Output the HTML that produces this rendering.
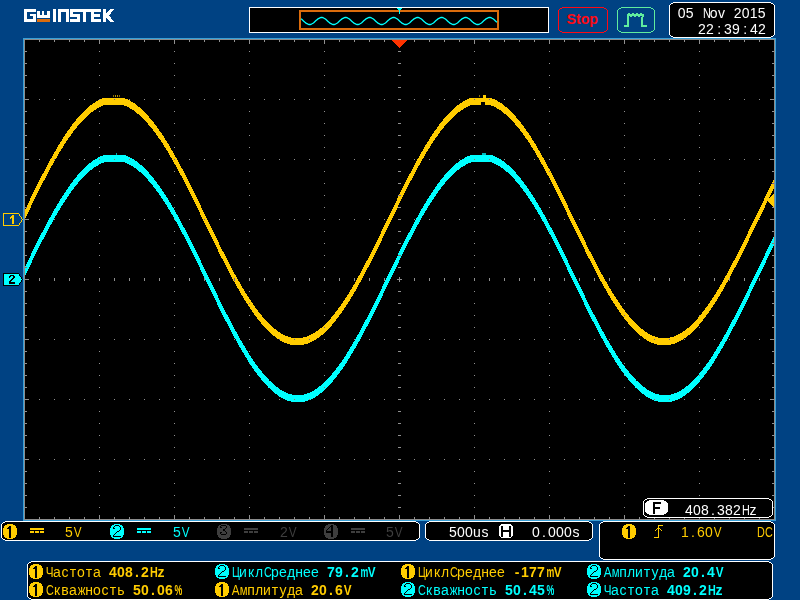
<!DOCTYPE html>
<html><head><meta charset="utf-8"><style>
html,body{margin:0;padding:0;}
body{width:800px;height:600px;overflow:hidden;background:#004283;position:relative;font-family:"Liberation Sans",sans-serif;}
svg{position:absolute;left:0;top:0;}
.mono{position:absolute;left:0;height:16px;line-height:16px;will-change:transform;}
.mono span{position:absolute;top:0;width:8.0px;text-align:center;}
</style></head><body>
<svg width="800" height="600" viewBox="0 0 800 600" shape-rendering="crispEdges">
<rect x="23" y="38" width="753" height="483" fill="#389fd6"/>
<rect x="24" y="39" width="751" height="481" fill="#8c8c8c"/>
<rect x="25" y="40" width="749" height="479" fill="#000"/>
<path d="M25 209h1v9h-1zM26 207h1v9h-1zM27 205h1v9h-1zM28 203h1v9h-1zM29 201h1v9h-1zM30 198h1v10h-1zM31 196h1v9h-1zM32 194h1v9h-1zM33 192h1v9h-1zM34 190h1v9h-1zM35 188h1v9h-1zM36 186h1v9h-1zM37 184h1v9h-1zM38 182h1v9h-1zM39 180h1v9h-1zM40 178h1v9h-1zM41 176h1v9h-1zM42 174h1v9h-1zM43 173h1v8h-1zM44 171h1v9h-1zM45 169h1v9h-1zM46 167h1v9h-1zM47 165h1v9h-1zM48 163h1v9h-1zM49 161h1v9h-1zM50 159h1v9h-1zM51 158h1v8h-1zM52 156h1v9h-1zM53 154h1v9h-1zM54 152h1v9h-1zM55 151h1v8h-1zM56 149h1v9h-1zM57 147h1v9h-1zM58 145h1v9h-1zM59 144h1v8h-1zM60 142h1v9h-1zM61 141h1v8h-1zM62 139h1v9h-1zM63 137h1v9h-1zM64 136h1v8h-1zM65 134h1v9h-1zM66 133h1v8h-1zM67 131h1v9h-1zM68 130h1v8h-1zM69 129h1v8h-1zM70 127h1v9h-1zM71 126h1v8h-1zM72 124h1v9h-1zM73 123h1v8h-1zM74 122h1v8h-1zM75 121h1v8h-1zM76 119h1v9h-1zM77 118h1v8h-1zM78 117h1v8h-1zM79 116h1v8h-1zM80 115h1v8h-1zM81 114h1v8h-1zM82 113h1v8h-1zM83 112h1v8h-1zM84 111h1v8h-1zM85 110h1v8h-1zM86 109h1v8h-1zM87 108h1v8h-1zM88 107h1v8h-1zM89 106h1v8h-1zM90 105h1v8h-1zM91 105h1v7h-1zM92 104h1v8h-1zM93 103h1v8h-1zM94 103h1v7h-1zM95 102h1v8h-1zM96 101h1v8h-1zM97 101h1v7h-1zM98 100h1v8h-1zM99 100h1v7h-1zM100 99h1v8h-1zM101 99h1v7h-1zM102 98h1v8h-1zM103 98h1v7h-1zM104 98h1v7h-1zM105 98h1v7h-1zM106 98h1v7h-1zM107 98h1v7h-1zM108 98h1v7h-1zM109 98h1v7h-1zM110 98h1v7h-1zM111 98h1v7h-1zM112 98h1v7h-1zM113 98h1v7h-1zM114 98h1v7h-1zM115 98h1v7h-1zM116 98h1v7h-1zM117 98h1v7h-1zM118 98h1v7h-1zM119 98h1v7h-1zM120 98h1v7h-1zM121 98h1v7h-1zM122 98h1v7h-1zM123 98h1v7h-1zM124 98h1v8h-1zM125 99h1v7h-1zM126 99h1v7h-1zM127 99h1v8h-1zM128 100h1v7h-1zM129 100h1v8h-1zM130 101h1v8h-1zM131 102h1v7h-1zM132 102h1v8h-1zM133 103h1v7h-1zM134 103h1v8h-1zM135 104h1v8h-1zM136 105h1v8h-1zM137 106h1v8h-1zM138 107h1v7h-1zM139 107h1v8h-1zM140 108h1v8h-1zM141 109h1v8h-1zM142 110h1v8h-1zM143 111h1v8h-1zM144 112h1v8h-1zM145 113h1v8h-1zM146 114h1v8h-1zM147 115h1v8h-1zM148 116h1v9h-1zM149 118h1v8h-1zM150 119h1v8h-1zM151 120h1v8h-1zM152 121h1v8h-1zM153 122h1v9h-1zM154 124h1v8h-1zM155 125h1v8h-1zM156 126h1v9h-1zM157 128h1v8h-1zM158 129h1v9h-1zM159 131h1v8h-1zM160 132h1v8h-1zM161 133h1v9h-1zM162 135h1v8h-1zM163 136h1v9h-1zM164 138h1v9h-1zM165 140h1v8h-1zM166 141h1v9h-1zM167 143h1v8h-1zM168 144h1v9h-1zM169 146h1v9h-1zM170 148h1v9h-1zM171 150h1v8h-1zM172 151h1v9h-1zM173 153h1v9h-1zM174 155h1v9h-1zM175 157h1v8h-1zM176 158h1v9h-1zM177 160h1v9h-1zM178 162h1v9h-1zM179 164h1v9h-1zM180 166h1v9h-1zM181 168h1v8h-1zM182 169h1v9h-1zM183 171h1v9h-1zM184 173h1v9h-1zM185 175h1v9h-1zM186 177h1v9h-1zM187 179h1v9h-1zM188 181h1v9h-1zM189 183h1v9h-1zM190 185h1v9h-1zM191 187h1v9h-1zM192 189h1v9h-1zM193 191h1v9h-1zM194 193h1v9h-1zM195 195h1v9h-1zM196 197h1v9h-1zM197 199h1v9h-1zM198 201h1v9h-1zM199 203h1v9h-1zM200 205h1v10h-1zM201 208h1v9h-1zM202 210h1v9h-1zM203 212h1v9h-1zM204 214h1v9h-1zM205 216h1v9h-1zM206 218h1v9h-1zM207 220h1v9h-1zM208 222h1v9h-1zM209 224h1v9h-1zM210 226h1v9h-1zM211 228h1v9h-1zM212 230h1v9h-1zM213 232h1v9h-1zM214 234h1v9h-1zM215 236h1v9h-1zM216 238h1v9h-1zM217 240h1v9h-1zM218 242h1v10h-1zM219 245h1v9h-1zM220 247h1v9h-1zM221 249h1v9h-1zM222 251h1v8h-1zM223 252h1v9h-1zM224 254h1v9h-1zM225 256h1v9h-1zM226 258h1v9h-1zM227 260h1v9h-1zM228 262h1v9h-1zM229 264h1v9h-1zM230 266h1v9h-1zM231 268h1v9h-1zM232 270h1v9h-1zM233 272h1v9h-1zM234 274h1v8h-1zM235 275h1v9h-1zM236 277h1v9h-1zM237 279h1v9h-1zM238 281h1v8h-1zM239 282h1v9h-1zM240 284h1v9h-1zM241 286h1v9h-1zM242 288h1v8h-1zM243 289h1v9h-1zM244 291h1v9h-1zM245 293h1v8h-1zM246 294h1v9h-1zM247 296h1v8h-1zM248 297h1v9h-1zM249 299h1v8h-1zM250 300h1v9h-1zM251 302h1v8h-1zM252 303h1v9h-1zM253 305h1v8h-1zM254 306h1v9h-1zM255 308h1v8h-1zM256 309h1v8h-1zM257 310h1v9h-1zM258 312h1v8h-1zM259 313h1v8h-1zM260 314h1v8h-1zM261 315h1v9h-1zM262 317h1v8h-1zM263 318h1v8h-1zM264 319h1v8h-1zM265 320h1v8h-1zM266 321h1v8h-1zM267 322h1v8h-1zM268 323h1v8h-1zM269 324h1v8h-1zM270 325h1v8h-1zM271 326h1v8h-1zM272 327h1v8h-1zM273 328h1v8h-1zM274 329h1v7h-1zM275 329h1v8h-1zM276 330h1v8h-1zM277 331h1v8h-1zM278 332h1v7h-1zM279 332h1v8h-1zM280 333h1v8h-1zM281 334h1v7h-1zM282 334h1v8h-1zM283 335h1v7h-1zM284 335h1v8h-1zM285 336h1v7h-1zM286 336h1v7h-1zM287 336h1v8h-1zM288 337h1v7h-1zM289 337h1v7h-1zM290 337h1v8h-1zM291 338h1v7h-1zM292 338h1v7h-1zM293 338h1v7h-1zM294 338h1v7h-1zM295 338h1v7h-1zM296 338h1v7h-1zM297 338h1v7h-1zM298 338h1v7h-1zM299 338h1v7h-1zM300 338h1v7h-1zM301 338h1v7h-1zM302 338h1v7h-1zM303 337h1v8h-1zM304 337h1v7h-1zM305 337h1v7h-1zM306 337h1v7h-1zM307 336h1v8h-1zM308 336h1v7h-1zM309 335h1v8h-1zM310 335h1v7h-1zM311 334h1v8h-1zM312 334h1v7h-1zM313 333h1v8h-1zM314 333h1v7h-1zM315 332h1v8h-1zM316 331h1v8h-1zM317 331h1v7h-1zM318 330h1v8h-1zM319 329h1v8h-1zM320 328h1v8h-1zM321 328h1v7h-1zM322 327h1v8h-1zM323 326h1v8h-1zM324 325h1v8h-1zM325 324h1v8h-1zM326 323h1v8h-1zM327 322h1v8h-1zM328 321h1v8h-1zM329 320h1v8h-1zM330 319h1v8h-1zM331 317h1v9h-1zM332 316h1v8h-1zM333 315h1v8h-1zM334 314h1v8h-1zM335 312h1v9h-1zM336 311h1v8h-1zM337 310h1v8h-1zM338 308h1v9h-1zM339 307h1v8h-1zM340 306h1v8h-1zM341 304h1v9h-1zM342 303h1v8h-1zM343 301h1v9h-1zM344 300h1v8h-1zM345 298h1v9h-1zM346 297h1v8h-1zM347 295h1v9h-1zM348 294h1v8h-1zM349 292h1v9h-1zM350 290h1v9h-1zM351 289h1v8h-1zM352 287h1v9h-1zM353 285h1v9h-1zM354 284h1v8h-1zM355 282h1v9h-1zM356 280h1v9h-1zM357 278h1v9h-1zM358 276h1v9h-1zM359 275h1v8h-1zM360 273h1v9h-1zM361 271h1v9h-1zM362 269h1v9h-1zM363 267h1v9h-1zM364 265h1v9h-1zM365 263h1v9h-1zM366 261h1v9h-1zM367 260h1v8h-1zM368 258h1v9h-1zM369 256h1v9h-1zM370 254h1v9h-1zM371 252h1v9h-1zM372 250h1v9h-1zM373 248h1v9h-1zM374 246h1v9h-1zM375 244h1v9h-1zM376 242h1v9h-1zM377 240h1v9h-1zM378 238h1v9h-1zM379 236h1v9h-1zM380 234h1v9h-1zM381 231h1v10h-1zM382 229h1v9h-1zM383 227h1v9h-1zM384 225h1v9h-1zM385 223h1v9h-1zM386 221h1v9h-1zM387 219h1v9h-1zM388 217h1v9h-1zM389 215h1v9h-1zM390 213h1v9h-1zM391 211h1v9h-1zM392 209h1v9h-1zM393 207h1v9h-1zM394 205h1v9h-1zM395 203h1v9h-1zM396 201h1v9h-1zM397 198h1v10h-1zM398 196h1v9h-1zM399 194h1v9h-1zM400 192h1v9h-1zM401 190h1v9h-1zM402 188h1v9h-1zM403 186h1v9h-1zM404 184h1v9h-1zM405 182h1v9h-1zM406 180h1v9h-1zM407 178h1v9h-1zM408 176h1v9h-1zM409 174h1v9h-1zM410 173h1v8h-1zM411 171h1v9h-1zM412 169h1v9h-1zM413 167h1v9h-1zM414 165h1v9h-1zM415 163h1v9h-1zM416 161h1v9h-1zM417 159h1v9h-1zM418 158h1v8h-1zM419 156h1v9h-1zM420 154h1v9h-1zM421 152h1v9h-1zM422 151h1v8h-1zM423 149h1v9h-1zM424 147h1v9h-1zM425 145h1v9h-1zM426 144h1v8h-1zM427 142h1v9h-1zM428 141h1v8h-1zM429 139h1v9h-1zM430 137h1v9h-1zM431 136h1v8h-1zM432 134h1v9h-1zM433 133h1v8h-1zM434 131h1v9h-1zM435 130h1v8h-1zM436 129h1v8h-1zM437 127h1v9h-1zM438 126h1v8h-1zM439 124h1v9h-1zM440 123h1v8h-1zM441 122h1v8h-1zM442 121h1v8h-1zM443 119h1v9h-1zM444 118h1v8h-1zM445 117h1v8h-1zM446 116h1v8h-1zM447 115h1v8h-1zM448 114h1v8h-1zM449 113h1v8h-1zM450 112h1v8h-1zM451 111h1v8h-1zM452 110h1v8h-1zM453 109h1v8h-1zM454 108h1v8h-1zM455 107h1v8h-1zM456 106h1v8h-1zM457 105h1v8h-1zM458 105h1v7h-1zM459 104h1v8h-1zM460 103h1v8h-1zM461 103h1v7h-1zM462 102h1v8h-1zM463 101h1v8h-1zM464 101h1v7h-1zM465 100h1v8h-1zM466 100h1v7h-1zM467 99h1v8h-1zM468 99h1v7h-1zM469 98h1v8h-1zM470 98h1v7h-1zM471 98h1v7h-1zM472 98h1v7h-1zM473 98h1v7h-1zM474 98h1v7h-1zM475 98h1v7h-1zM476 98h1v7h-1zM477 98h1v7h-1zM478 98h1v7h-1zM479 98h1v7h-1zM480 98h1v7h-1zM481 98h1v7h-1zM482 98h1v7h-1zM483 98h1v7h-1zM484 98h1v7h-1zM485 98h1v7h-1zM486 98h1v7h-1zM487 98h1v7h-1zM488 98h1v7h-1zM489 98h1v7h-1zM490 98h1v7h-1zM491 98h1v8h-1zM492 99h1v7h-1zM493 99h1v7h-1zM494 99h1v8h-1zM495 100h1v7h-1zM496 100h1v8h-1zM497 101h1v8h-1zM498 102h1v7h-1zM499 102h1v8h-1zM500 103h1v7h-1zM501 103h1v8h-1zM502 104h1v8h-1zM503 105h1v8h-1zM504 106h1v8h-1zM505 107h1v7h-1zM506 107h1v8h-1zM507 108h1v8h-1zM508 109h1v8h-1zM509 110h1v8h-1zM510 111h1v8h-1zM511 112h1v8h-1zM512 113h1v8h-1zM513 114h1v8h-1zM514 115h1v8h-1zM515 116h1v9h-1zM516 118h1v8h-1zM517 119h1v8h-1zM518 120h1v8h-1zM519 121h1v8h-1zM520 122h1v9h-1zM521 124h1v8h-1zM522 125h1v8h-1zM523 126h1v9h-1zM524 128h1v8h-1zM525 129h1v9h-1zM526 131h1v8h-1zM527 132h1v8h-1zM528 133h1v9h-1zM529 135h1v8h-1zM530 136h1v9h-1zM531 138h1v9h-1zM532 140h1v8h-1zM533 141h1v9h-1zM534 143h1v8h-1zM535 144h1v9h-1zM536 146h1v9h-1zM537 148h1v9h-1zM538 150h1v8h-1zM539 151h1v9h-1zM540 153h1v9h-1zM541 155h1v9h-1zM542 157h1v8h-1zM543 158h1v9h-1zM544 160h1v9h-1zM545 162h1v9h-1zM546 164h1v9h-1zM547 166h1v9h-1zM548 168h1v8h-1zM549 169h1v9h-1zM550 171h1v9h-1zM551 173h1v9h-1zM552 175h1v9h-1zM553 177h1v9h-1zM554 179h1v9h-1zM555 181h1v9h-1zM556 183h1v9h-1zM557 185h1v9h-1zM558 187h1v9h-1zM559 189h1v9h-1zM560 191h1v9h-1zM561 193h1v9h-1zM562 195h1v9h-1zM563 197h1v9h-1zM564 199h1v9h-1zM565 201h1v9h-1zM566 203h1v9h-1zM567 205h1v10h-1zM568 208h1v9h-1zM569 210h1v9h-1zM570 212h1v9h-1zM571 214h1v9h-1zM572 216h1v9h-1zM573 218h1v9h-1zM574 220h1v9h-1zM575 222h1v9h-1zM576 224h1v9h-1zM577 226h1v9h-1zM578 228h1v9h-1zM579 230h1v9h-1zM580 232h1v9h-1zM581 234h1v9h-1zM582 236h1v9h-1zM583 238h1v9h-1zM584 240h1v9h-1zM585 242h1v10h-1zM586 245h1v9h-1zM587 247h1v9h-1zM588 249h1v9h-1zM589 251h1v8h-1zM590 252h1v9h-1zM591 254h1v9h-1zM592 256h1v9h-1zM593 258h1v9h-1zM594 260h1v9h-1zM595 262h1v9h-1zM596 264h1v9h-1zM597 266h1v9h-1zM598 268h1v9h-1zM599 270h1v9h-1zM600 272h1v9h-1zM601 274h1v8h-1zM602 275h1v9h-1zM603 277h1v9h-1zM604 279h1v9h-1zM605 281h1v8h-1zM606 282h1v9h-1zM607 284h1v9h-1zM608 286h1v9h-1zM609 288h1v8h-1zM610 289h1v9h-1zM611 291h1v9h-1zM612 293h1v8h-1zM613 294h1v9h-1zM614 296h1v8h-1zM615 297h1v9h-1zM616 299h1v8h-1zM617 300h1v9h-1zM618 302h1v8h-1zM619 303h1v9h-1zM620 305h1v8h-1zM621 306h1v9h-1zM622 308h1v8h-1zM623 309h1v8h-1zM624 310h1v9h-1zM625 312h1v8h-1zM626 313h1v8h-1zM627 314h1v8h-1zM628 315h1v9h-1zM629 317h1v8h-1zM630 318h1v8h-1zM631 319h1v8h-1zM632 320h1v8h-1zM633 321h1v8h-1zM634 322h1v8h-1zM635 323h1v8h-1zM636 324h1v8h-1zM637 325h1v8h-1zM638 326h1v8h-1zM639 327h1v8h-1zM640 328h1v8h-1zM641 329h1v7h-1zM642 329h1v8h-1zM643 330h1v8h-1zM644 331h1v8h-1zM645 332h1v7h-1zM646 332h1v8h-1zM647 333h1v8h-1zM648 334h1v7h-1zM649 334h1v8h-1zM650 335h1v7h-1zM651 335h1v8h-1zM652 336h1v7h-1zM653 336h1v7h-1zM654 336h1v8h-1zM655 337h1v7h-1zM656 337h1v7h-1zM657 337h1v8h-1zM658 338h1v7h-1zM659 338h1v7h-1zM660 338h1v7h-1zM661 338h1v7h-1zM662 338h1v7h-1zM663 338h1v7h-1zM664 338h1v7h-1zM665 338h1v7h-1zM666 338h1v7h-1zM667 338h1v7h-1zM668 338h1v7h-1zM669 338h1v7h-1zM670 337h1v8h-1zM671 337h1v7h-1zM672 337h1v7h-1zM673 337h1v7h-1zM674 336h1v8h-1zM675 336h1v7h-1zM676 335h1v8h-1zM677 335h1v7h-1zM678 334h1v8h-1zM679 334h1v7h-1zM680 333h1v8h-1zM681 333h1v7h-1zM682 332h1v8h-1zM683 331h1v8h-1zM684 331h1v7h-1zM685 330h1v8h-1zM686 329h1v8h-1zM687 328h1v8h-1zM688 328h1v7h-1zM689 327h1v8h-1zM690 326h1v8h-1zM691 325h1v8h-1zM692 324h1v8h-1zM693 323h1v8h-1zM694 322h1v8h-1zM695 321h1v8h-1zM696 320h1v8h-1zM697 319h1v8h-1zM698 317h1v9h-1zM699 316h1v8h-1zM700 315h1v8h-1zM701 314h1v8h-1zM702 312h1v9h-1zM703 311h1v8h-1zM704 310h1v8h-1zM705 308h1v9h-1zM706 307h1v8h-1zM707 306h1v8h-1zM708 304h1v9h-1zM709 303h1v8h-1zM710 301h1v9h-1zM711 300h1v8h-1zM712 298h1v9h-1zM713 297h1v8h-1zM714 295h1v9h-1zM715 294h1v8h-1zM716 292h1v9h-1zM717 290h1v9h-1zM718 289h1v8h-1zM719 287h1v9h-1zM720 285h1v9h-1zM721 284h1v8h-1zM722 282h1v9h-1zM723 280h1v9h-1zM724 278h1v9h-1zM725 276h1v9h-1zM726 275h1v8h-1zM727 273h1v9h-1zM728 271h1v9h-1zM729 269h1v9h-1zM730 267h1v9h-1zM731 265h1v9h-1zM732 263h1v9h-1zM733 261h1v9h-1zM734 260h1v8h-1zM735 258h1v9h-1zM736 256h1v9h-1zM737 254h1v9h-1zM738 252h1v9h-1zM739 250h1v9h-1zM740 248h1v9h-1zM741 246h1v9h-1zM742 244h1v9h-1zM743 242h1v9h-1zM744 240h1v9h-1zM745 238h1v9h-1zM746 236h1v9h-1zM747 234h1v9h-1zM748 231h1v10h-1zM749 229h1v9h-1zM750 227h1v9h-1zM751 225h1v9h-1zM752 223h1v9h-1zM753 221h1v9h-1zM754 219h1v9h-1zM755 217h1v9h-1zM756 215h1v9h-1zM757 213h1v9h-1zM758 211h1v9h-1zM759 209h1v9h-1zM760 207h1v9h-1zM761 205h1v9h-1zM762 203h1v9h-1zM763 201h1v9h-1zM764 198h1v10h-1zM765 196h1v9h-1zM766 194h1v9h-1zM767 192h1v9h-1zM768 190h1v9h-1zM769 188h1v9h-1zM770 186h1v9h-1zM771 184h1v9h-1zM772 182h1v9h-1zM773 180h1v9h-1z" fill="#ffcc00"/>
<path d="M25 266h1v9h-1zM26 264h1v9h-1zM27 262h1v9h-1zM28 260h1v9h-1zM29 258h1v9h-1zM30 256h1v9h-1zM31 253h1v10h-1zM32 251h1v9h-1zM33 249h1v9h-1zM34 247h1v9h-1zM35 245h1v9h-1zM36 243h1v9h-1zM37 241h1v9h-1zM38 239h1v9h-1zM39 237h1v9h-1zM40 235h1v9h-1zM41 233h1v9h-1zM42 232h1v8h-1zM43 230h1v9h-1zM44 228h1v9h-1zM45 226h1v9h-1zM46 224h1v9h-1zM47 222h1v9h-1zM48 220h1v9h-1zM49 218h1v9h-1zM50 217h1v8h-1zM51 215h1v9h-1zM52 213h1v9h-1zM53 211h1v9h-1zM54 209h1v9h-1zM55 208h1v8h-1zM56 206h1v9h-1zM57 204h1v9h-1zM58 203h1v8h-1zM59 201h1v9h-1zM60 199h1v9h-1zM61 198h1v8h-1zM62 196h1v9h-1zM63 195h1v8h-1zM64 193h1v9h-1zM65 192h1v8h-1zM66 190h1v9h-1zM67 189h1v8h-1zM68 187h1v9h-1zM69 186h1v8h-1zM70 184h1v9h-1zM71 183h1v8h-1zM72 182h1v8h-1zM73 180h1v9h-1zM74 179h1v8h-1zM75 178h1v8h-1zM76 177h1v8h-1zM77 175h1v9h-1zM78 174h1v8h-1zM79 173h1v8h-1zM80 172h1v8h-1zM81 171h1v8h-1zM82 170h1v8h-1zM83 169h1v8h-1zM84 168h1v8h-1zM85 167h1v8h-1zM86 166h1v8h-1zM87 165h1v8h-1zM88 164h1v8h-1zM89 163h1v8h-1zM90 163h1v7h-1zM91 162h1v8h-1zM92 161h1v8h-1zM93 160h1v8h-1zM94 160h1v7h-1zM95 159h1v8h-1zM96 159h1v7h-1zM97 158h1v8h-1zM98 157h1v8h-1zM99 157h1v7h-1zM100 156h1v8h-1zM101 156h1v7h-1zM102 156h1v7h-1zM103 155h1v8h-1zM104 155h1v7h-1zM105 155h1v7h-1zM106 155h1v7h-1zM107 155h1v7h-1zM108 155h1v7h-1zM109 155h1v7h-1zM110 155h1v7h-1zM111 155h1v7h-1zM112 155h1v7h-1zM113 155h1v7h-1zM114 155h1v7h-1zM115 155h1v7h-1zM116 155h1v7h-1zM117 155h1v7h-1zM118 155h1v7h-1zM119 155h1v7h-1zM120 155h1v7h-1zM121 155h1v7h-1zM122 155h1v7h-1zM123 155h1v7h-1zM124 155h1v7h-1zM125 155h1v8h-1zM126 156h1v7h-1zM127 156h1v8h-1zM128 157h1v7h-1zM129 157h1v8h-1zM130 158h1v7h-1zM131 158h1v8h-1zM132 159h1v7h-1zM133 159h1v8h-1zM134 160h1v8h-1zM135 161h1v7h-1zM136 161h1v8h-1zM137 162h1v8h-1zM138 163h1v8h-1zM139 164h1v8h-1zM140 165h1v7h-1zM141 165h1v8h-1zM142 166h1v8h-1zM143 167h1v8h-1zM144 168h1v8h-1zM145 169h1v8h-1zM146 170h1v8h-1zM147 171h1v8h-1zM148 172h1v9h-1zM149 174h1v8h-1zM150 175h1v8h-1zM151 176h1v8h-1zM152 177h1v8h-1zM153 178h1v9h-1zM154 180h1v8h-1zM155 181h1v8h-1zM156 182h1v9h-1zM157 184h1v8h-1zM158 185h1v8h-1zM159 186h1v9h-1zM160 188h1v8h-1zM161 189h1v9h-1zM162 191h1v8h-1zM163 192h1v9h-1zM164 194h1v8h-1zM165 195h1v9h-1zM166 197h1v8h-1zM167 198h1v9h-1zM168 200h1v9h-1zM169 202h1v8h-1zM170 203h1v9h-1zM171 205h1v9h-1zM172 207h1v8h-1zM173 208h1v9h-1zM174 210h1v9h-1zM175 212h1v9h-1zM176 214h1v8h-1zM177 215h1v9h-1zM178 217h1v9h-1zM179 219h1v9h-1zM180 221h1v9h-1zM181 223h1v9h-1zM182 225h1v9h-1zM183 227h1v8h-1zM184 228h1v9h-1zM185 230h1v9h-1zM186 232h1v9h-1zM187 234h1v9h-1zM188 236h1v9h-1zM189 238h1v9h-1zM190 240h1v9h-1zM191 242h1v9h-1zM192 244h1v9h-1zM193 246h1v9h-1zM194 248h1v9h-1zM195 250h1v9h-1zM196 252h1v9h-1zM197 254h1v9h-1zM198 256h1v9h-1zM199 258h1v9h-1zM200 260h1v10h-1zM201 263h1v9h-1zM202 265h1v9h-1zM203 267h1v9h-1zM204 269h1v9h-1zM205 271h1v9h-1zM206 273h1v9h-1zM207 275h1v9h-1zM208 277h1v9h-1zM209 279h1v9h-1zM210 281h1v9h-1zM211 283h1v9h-1zM212 285h1v9h-1zM213 287h1v9h-1zM214 289h1v9h-1zM215 291h1v9h-1zM216 293h1v9h-1zM217 295h1v10h-1zM218 298h1v9h-1zM219 300h1v9h-1zM220 302h1v9h-1zM221 304h1v9h-1zM222 306h1v9h-1zM223 308h1v9h-1zM224 310h1v9h-1zM225 312h1v9h-1zM226 314h1v8h-1zM227 315h1v9h-1zM228 317h1v9h-1zM229 319h1v9h-1zM230 321h1v9h-1zM231 323h1v9h-1zM232 325h1v9h-1zM233 327h1v9h-1zM234 329h1v9h-1zM235 331h1v8h-1zM236 332h1v9h-1zM237 334h1v9h-1zM238 336h1v9h-1zM239 338h1v9h-1zM240 340h1v8h-1zM241 341h1v9h-1zM242 343h1v9h-1zM243 345h1v8h-1zM244 346h1v9h-1zM245 348h1v9h-1zM246 350h1v8h-1zM247 351h1v9h-1zM248 353h1v9h-1zM249 355h1v8h-1zM250 356h1v9h-1zM251 358h1v8h-1zM252 359h1v9h-1zM253 361h1v8h-1zM254 362h1v9h-1zM255 364h1v8h-1zM256 365h1v8h-1zM257 366h1v9h-1zM258 368h1v8h-1zM259 369h1v8h-1zM260 370h1v8h-1zM261 371h1v9h-1zM262 373h1v8h-1zM263 374h1v8h-1zM264 375h1v8h-1zM265 376h1v8h-1zM266 377h1v8h-1zM267 378h1v8h-1zM268 379h1v9h-1zM269 381h1v7h-1zM270 381h1v8h-1zM271 382h1v8h-1zM272 383h1v8h-1zM273 384h1v8h-1zM274 385h1v8h-1zM275 386h1v8h-1zM276 387h1v7h-1zM277 387h1v8h-1zM278 388h1v8h-1zM279 389h1v8h-1zM280 390h1v7h-1zM281 390h1v8h-1zM282 391h1v7h-1zM283 391h1v8h-1zM284 392h1v7h-1zM285 392h1v8h-1zM286 393h1v7h-1zM287 393h1v8h-1zM288 394h1v7h-1zM289 394h1v7h-1zM290 394h1v7h-1zM291 394h1v8h-1zM292 395h1v7h-1zM293 395h1v7h-1zM294 395h1v7h-1zM295 395h1v7h-1zM296 395h1v7h-1zM297 395h1v7h-1zM298 395h1v7h-1zM299 395h1v7h-1zM300 395h1v7h-1zM301 395h1v7h-1zM302 395h1v7h-1zM303 395h1v7h-1zM304 394h1v8h-1zM305 394h1v7h-1zM306 394h1v7h-1zM307 393h1v8h-1zM308 393h1v7h-1zM309 393h1v7h-1zM310 392h1v8h-1zM311 392h1v7h-1zM312 391h1v8h-1zM313 391h1v7h-1zM314 390h1v8h-1zM315 389h1v8h-1zM316 389h1v7h-1zM317 388h1v8h-1zM318 387h1v8h-1zM319 386h1v8h-1zM320 386h1v7h-1zM321 385h1v8h-1zM322 384h1v8h-1zM323 383h1v8h-1zM324 382h1v8h-1zM325 381h1v8h-1zM326 380h1v8h-1zM327 379h1v8h-1zM328 378h1v8h-1zM329 377h1v8h-1zM330 376h1v8h-1zM331 375h1v8h-1zM332 373h1v9h-1zM333 372h1v8h-1zM334 371h1v8h-1zM335 370h1v8h-1zM336 368h1v9h-1zM337 367h1v8h-1zM338 366h1v8h-1zM339 364h1v9h-1zM340 363h1v8h-1zM341 362h1v8h-1zM342 360h1v9h-1zM343 359h1v8h-1zM344 357h1v9h-1zM345 356h1v8h-1zM346 354h1v9h-1zM347 352h1v9h-1zM348 351h1v8h-1zM349 349h1v9h-1zM350 347h1v9h-1zM351 346h1v8h-1zM352 344h1v9h-1zM353 342h1v9h-1zM354 341h1v8h-1zM355 339h1v9h-1zM356 337h1v9h-1zM357 335h1v9h-1zM358 334h1v8h-1zM359 332h1v9h-1zM360 330h1v9h-1zM361 328h1v9h-1zM362 326h1v9h-1zM363 324h1v9h-1zM364 322h1v9h-1zM365 320h1v9h-1zM366 319h1v8h-1zM367 317h1v9h-1zM368 315h1v9h-1zM369 313h1v9h-1zM370 311h1v9h-1zM371 309h1v9h-1zM372 307h1v9h-1zM373 305h1v9h-1zM374 303h1v9h-1zM375 301h1v9h-1zM376 299h1v9h-1zM377 297h1v9h-1zM378 295h1v9h-1zM379 293h1v9h-1zM380 291h1v9h-1zM381 289h1v9h-1zM382 286h1v10h-1zM383 284h1v9h-1zM384 282h1v9h-1zM385 280h1v9h-1zM386 278h1v9h-1zM387 276h1v9h-1zM388 274h1v9h-1zM389 272h1v9h-1zM390 270h1v9h-1zM391 268h1v9h-1zM392 266h1v9h-1zM393 264h1v9h-1zM394 262h1v9h-1zM395 260h1v9h-1zM396 258h1v9h-1zM397 256h1v9h-1zM398 253h1v10h-1zM399 251h1v9h-1zM400 249h1v9h-1zM401 247h1v9h-1zM402 245h1v9h-1zM403 243h1v9h-1zM404 241h1v9h-1zM405 239h1v9h-1zM406 237h1v9h-1zM407 235h1v9h-1zM408 233h1v9h-1zM409 232h1v8h-1zM410 230h1v9h-1zM411 228h1v9h-1zM412 226h1v9h-1zM413 224h1v9h-1zM414 222h1v9h-1zM415 220h1v9h-1zM416 218h1v9h-1zM417 217h1v8h-1zM418 215h1v9h-1zM419 213h1v9h-1zM420 211h1v9h-1zM421 209h1v9h-1zM422 208h1v8h-1zM423 206h1v9h-1zM424 204h1v9h-1zM425 203h1v8h-1zM426 201h1v9h-1zM427 199h1v9h-1zM428 198h1v8h-1zM429 196h1v9h-1zM430 195h1v8h-1zM431 193h1v9h-1zM432 192h1v8h-1zM433 190h1v9h-1zM434 189h1v8h-1zM435 187h1v9h-1zM436 186h1v8h-1zM437 184h1v9h-1zM438 183h1v8h-1zM439 182h1v8h-1zM440 180h1v9h-1zM441 179h1v8h-1zM442 178h1v8h-1zM443 177h1v8h-1zM444 175h1v9h-1zM445 174h1v8h-1zM446 173h1v8h-1zM447 172h1v8h-1zM448 171h1v8h-1zM449 170h1v8h-1zM450 169h1v8h-1zM451 168h1v8h-1zM452 167h1v8h-1zM453 166h1v8h-1zM454 165h1v8h-1zM455 164h1v8h-1zM456 163h1v8h-1zM457 163h1v7h-1zM458 162h1v8h-1zM459 161h1v8h-1zM460 160h1v8h-1zM461 160h1v7h-1zM462 159h1v8h-1zM463 159h1v7h-1zM464 158h1v8h-1zM465 157h1v8h-1zM466 157h1v7h-1zM467 156h1v8h-1zM468 156h1v7h-1zM469 156h1v7h-1zM470 155h1v8h-1zM471 155h1v7h-1zM472 155h1v7h-1zM473 155h1v7h-1zM474 155h1v7h-1zM475 155h1v7h-1zM476 155h1v7h-1zM477 155h1v7h-1zM478 155h1v7h-1zM479 155h1v7h-1zM480 155h1v7h-1zM481 155h1v7h-1zM482 155h1v7h-1zM483 155h1v7h-1zM484 155h1v7h-1zM485 155h1v7h-1zM486 155h1v7h-1zM487 155h1v7h-1zM488 155h1v7h-1zM489 155h1v7h-1zM490 155h1v7h-1zM491 155h1v7h-1zM492 155h1v8h-1zM493 156h1v7h-1zM494 156h1v8h-1zM495 157h1v7h-1zM496 157h1v8h-1zM497 158h1v7h-1zM498 158h1v8h-1zM499 159h1v7h-1zM500 159h1v8h-1zM501 160h1v8h-1zM502 161h1v7h-1zM503 161h1v8h-1zM504 162h1v8h-1zM505 163h1v8h-1zM506 164h1v8h-1zM507 165h1v7h-1zM508 165h1v8h-1zM509 166h1v8h-1zM510 167h1v8h-1zM511 168h1v8h-1zM512 169h1v8h-1zM513 170h1v8h-1zM514 171h1v8h-1zM515 172h1v9h-1zM516 174h1v8h-1zM517 175h1v8h-1zM518 176h1v8h-1zM519 177h1v8h-1zM520 178h1v9h-1zM521 180h1v8h-1zM522 181h1v8h-1zM523 182h1v9h-1zM524 184h1v8h-1zM525 185h1v8h-1zM526 186h1v9h-1zM527 188h1v8h-1zM528 189h1v9h-1zM529 191h1v8h-1zM530 192h1v9h-1zM531 194h1v8h-1zM532 195h1v9h-1zM533 197h1v8h-1zM534 198h1v9h-1zM535 200h1v9h-1zM536 202h1v8h-1zM537 203h1v9h-1zM538 205h1v9h-1zM539 207h1v8h-1zM540 208h1v9h-1zM541 210h1v9h-1zM542 212h1v9h-1zM543 214h1v8h-1zM544 215h1v9h-1zM545 217h1v9h-1zM546 219h1v9h-1zM547 221h1v9h-1zM548 223h1v9h-1zM549 225h1v9h-1zM550 227h1v8h-1zM551 228h1v9h-1zM552 230h1v9h-1zM553 232h1v9h-1zM554 234h1v9h-1zM555 236h1v9h-1zM556 238h1v9h-1zM557 240h1v9h-1zM558 242h1v9h-1zM559 244h1v9h-1zM560 246h1v9h-1zM561 248h1v9h-1zM562 250h1v9h-1zM563 252h1v9h-1zM564 254h1v9h-1zM565 256h1v9h-1zM566 258h1v9h-1zM567 260h1v10h-1zM568 263h1v9h-1zM569 265h1v9h-1zM570 267h1v9h-1zM571 269h1v9h-1zM572 271h1v9h-1zM573 273h1v9h-1zM574 275h1v9h-1zM575 277h1v9h-1zM576 279h1v9h-1zM577 281h1v9h-1zM578 283h1v9h-1zM579 285h1v9h-1zM580 287h1v9h-1zM581 289h1v9h-1zM582 291h1v9h-1zM583 293h1v9h-1zM584 295h1v10h-1zM585 298h1v9h-1zM586 300h1v9h-1zM587 302h1v9h-1zM588 304h1v9h-1zM589 306h1v9h-1zM590 308h1v9h-1zM591 310h1v9h-1zM592 312h1v9h-1zM593 314h1v8h-1zM594 315h1v9h-1zM595 317h1v9h-1zM596 319h1v9h-1zM597 321h1v9h-1zM598 323h1v9h-1zM599 325h1v9h-1zM600 327h1v9h-1zM601 329h1v9h-1zM602 331h1v8h-1zM603 332h1v9h-1zM604 334h1v9h-1zM605 336h1v9h-1zM606 338h1v9h-1zM607 340h1v8h-1zM608 341h1v9h-1zM609 343h1v9h-1zM610 345h1v8h-1zM611 346h1v9h-1zM612 348h1v9h-1zM613 350h1v8h-1zM614 351h1v9h-1zM615 353h1v9h-1zM616 355h1v8h-1zM617 356h1v9h-1zM618 358h1v8h-1zM619 359h1v9h-1zM620 361h1v8h-1zM621 362h1v9h-1zM622 364h1v8h-1zM623 365h1v8h-1zM624 366h1v9h-1zM625 368h1v8h-1zM626 369h1v8h-1zM627 370h1v8h-1zM628 371h1v9h-1zM629 373h1v8h-1zM630 374h1v8h-1zM631 375h1v8h-1zM632 376h1v8h-1zM633 377h1v8h-1zM634 378h1v8h-1zM635 379h1v9h-1zM636 381h1v7h-1zM637 381h1v8h-1zM638 382h1v8h-1zM639 383h1v8h-1zM640 384h1v8h-1zM641 385h1v8h-1zM642 386h1v8h-1zM643 387h1v7h-1zM644 387h1v8h-1zM645 388h1v8h-1zM646 389h1v8h-1zM647 390h1v7h-1zM648 390h1v8h-1zM649 391h1v7h-1zM650 391h1v8h-1zM651 392h1v7h-1zM652 392h1v8h-1zM653 393h1v7h-1zM654 393h1v8h-1zM655 394h1v7h-1zM656 394h1v7h-1zM657 394h1v7h-1zM658 394h1v8h-1zM659 395h1v7h-1zM660 395h1v7h-1zM661 395h1v7h-1zM662 395h1v7h-1zM663 395h1v7h-1zM664 395h1v7h-1zM665 395h1v7h-1zM666 395h1v7h-1zM667 395h1v7h-1zM668 395h1v7h-1zM669 395h1v7h-1zM670 395h1v7h-1zM671 394h1v8h-1zM672 394h1v7h-1zM673 394h1v7h-1zM674 393h1v8h-1zM675 393h1v7h-1zM676 393h1v7h-1zM677 392h1v8h-1zM678 392h1v7h-1zM679 391h1v8h-1zM680 391h1v7h-1zM681 390h1v8h-1zM682 389h1v8h-1zM683 389h1v7h-1zM684 388h1v8h-1zM685 387h1v8h-1zM686 386h1v8h-1zM687 386h1v7h-1zM688 385h1v8h-1zM689 384h1v8h-1zM690 383h1v8h-1zM691 382h1v8h-1zM692 381h1v8h-1zM693 380h1v8h-1zM694 379h1v8h-1zM695 378h1v8h-1zM696 377h1v8h-1zM697 376h1v8h-1zM698 375h1v8h-1zM699 373h1v9h-1zM700 372h1v8h-1zM701 371h1v8h-1zM702 370h1v8h-1zM703 368h1v9h-1zM704 367h1v8h-1zM705 366h1v8h-1zM706 364h1v9h-1zM707 363h1v8h-1zM708 362h1v8h-1zM709 360h1v9h-1zM710 359h1v8h-1zM711 357h1v9h-1zM712 356h1v8h-1zM713 354h1v9h-1zM714 352h1v9h-1zM715 351h1v8h-1zM716 349h1v9h-1zM717 347h1v9h-1zM718 346h1v8h-1zM719 344h1v9h-1zM720 342h1v9h-1zM721 341h1v8h-1zM722 339h1v9h-1zM723 337h1v9h-1zM724 335h1v9h-1zM725 334h1v8h-1zM726 332h1v9h-1zM727 330h1v9h-1zM728 328h1v9h-1zM729 326h1v9h-1zM730 324h1v9h-1zM731 322h1v9h-1zM732 320h1v9h-1zM733 319h1v8h-1zM734 317h1v9h-1zM735 315h1v9h-1zM736 313h1v9h-1zM737 311h1v9h-1zM738 309h1v9h-1zM739 307h1v9h-1zM740 305h1v9h-1zM741 303h1v9h-1zM742 301h1v9h-1zM743 299h1v9h-1zM744 297h1v9h-1zM745 295h1v9h-1zM746 293h1v9h-1zM747 291h1v9h-1zM748 289h1v9h-1zM749 286h1v10h-1zM750 284h1v9h-1zM751 282h1v9h-1zM752 280h1v9h-1zM753 278h1v9h-1zM754 276h1v9h-1zM755 274h1v9h-1zM756 272h1v9h-1zM757 270h1v9h-1zM758 268h1v9h-1zM759 266h1v9h-1zM760 264h1v9h-1zM761 262h1v9h-1zM762 260h1v9h-1zM763 258h1v9h-1zM764 256h1v9h-1zM765 253h1v10h-1zM766 251h1v9h-1zM767 249h1v9h-1zM768 247h1v9h-1zM769 245h1v9h-1zM770 243h1v9h-1zM771 241h1v9h-1zM772 239h1v9h-1zM773 237h1v9h-1z" fill="#00ffff"/>
<rect x="113" y="95" width="1" height="2" fill="#8a6e00"/>
<rect x="115" y="95" width="1" height="2" fill="#b89200"/>
<rect x="117" y="95" width="1" height="2" fill="#b89200"/>
<rect x="119" y="95" width="1" height="2" fill="#8a6e00"/>
<rect x="479" y="95" width="1" height="2" fill="#8a6e00"/>
<rect x="483" y="95" width="3" height="3" fill="#ffcc00"/>
<rect x="481" y="102" width="4" height="3" fill="#000"/>
<rect x="116" y="153" width="1" height="2" fill="#00b0b0"/>
<rect x="482" y="153" width="4" height="2" fill="#00b8b8"/>
<path d="M99 51h1v1h-1zM99 63h1v1h-1zM99 75h1v1h-1zM99 87h1v1h-1zM99 99h1v1h-1zM99 111h1v1h-1zM99 123h1v1h-1zM99 135h1v1h-1zM99 147h1v1h-1zM99 171h1v1h-1zM99 183h1v1h-1zM99 195h1v1h-1zM99 207h1v1h-1zM99 219h1v1h-1zM99 231h1v1h-1zM99 243h1v1h-1zM99 255h1v1h-1zM99 267h1v1h-1zM99 279h1v1h-1zM99 291h1v1h-1zM99 303h1v1h-1zM99 315h1v1h-1zM99 327h1v1h-1zM99 339h1v1h-1zM99 351h1v1h-1zM99 363h1v1h-1zM99 375h1v1h-1zM99 387h1v1h-1zM99 399h1v1h-1zM99 411h1v1h-1zM99 423h1v1h-1zM99 435h1v1h-1zM99 447h1v1h-1zM99 459h1v1h-1zM99 471h1v1h-1zM99 483h1v1h-1zM99 495h1v1h-1zM99 507h1v1h-1zM174 51h1v1h-1zM174 63h1v1h-1zM174 75h1v1h-1zM174 87h1v1h-1zM174 99h1v1h-1zM174 111h1v1h-1zM174 123h1v1h-1zM174 135h1v1h-1zM174 147h1v1h-1zM174 171h1v1h-1zM174 183h1v1h-1zM174 195h1v1h-1zM174 207h1v1h-1zM174 219h1v1h-1zM174 231h1v1h-1zM174 243h1v1h-1zM174 255h1v1h-1zM174 267h1v1h-1zM174 279h1v1h-1zM174 291h1v1h-1zM174 303h1v1h-1zM174 315h1v1h-1zM174 327h1v1h-1zM174 339h1v1h-1zM174 351h1v1h-1zM174 363h1v1h-1zM174 375h1v1h-1zM174 387h1v1h-1zM174 399h1v1h-1zM174 411h1v1h-1zM174 423h1v1h-1zM174 435h1v1h-1zM174 447h1v1h-1zM174 459h1v1h-1zM174 471h1v1h-1zM174 483h1v1h-1zM174 495h1v1h-1zM174 507h1v1h-1zM249 51h1v1h-1zM249 63h1v1h-1zM249 75h1v1h-1zM249 87h1v1h-1zM249 99h1v1h-1zM249 111h1v1h-1zM249 123h1v1h-1zM249 135h1v1h-1zM249 147h1v1h-1zM249 159h1v1h-1zM249 171h1v1h-1zM249 183h1v1h-1zM249 195h1v1h-1zM249 207h1v1h-1zM249 219h1v1h-1zM249 231h1v1h-1zM249 243h1v1h-1zM249 255h1v1h-1zM249 267h1v1h-1zM249 279h1v1h-1zM249 291h1v1h-1zM249 315h1v1h-1zM249 327h1v1h-1zM249 339h1v1h-1zM249 351h1v1h-1zM249 363h1v1h-1zM249 375h1v1h-1zM249 387h1v1h-1zM249 399h1v1h-1zM249 411h1v1h-1zM249 423h1v1h-1zM249 435h1v1h-1zM249 447h1v1h-1zM249 459h1v1h-1zM249 471h1v1h-1zM249 483h1v1h-1zM249 495h1v1h-1zM249 507h1v1h-1zM324 51h1v1h-1zM324 63h1v1h-1zM324 75h1v1h-1zM324 87h1v1h-1zM324 99h1v1h-1zM324 111h1v1h-1zM324 123h1v1h-1zM324 135h1v1h-1zM324 147h1v1h-1zM324 159h1v1h-1zM324 171h1v1h-1zM324 183h1v1h-1zM324 195h1v1h-1zM324 207h1v1h-1zM324 219h1v1h-1zM324 231h1v1h-1zM324 243h1v1h-1zM324 255h1v1h-1zM324 267h1v1h-1zM324 279h1v1h-1zM324 291h1v1h-1zM324 303h1v1h-1zM324 315h1v1h-1zM324 339h1v1h-1zM324 351h1v1h-1zM324 363h1v1h-1zM324 375h1v1h-1zM324 399h1v1h-1zM324 411h1v1h-1zM324 423h1v1h-1zM324 435h1v1h-1zM324 447h1v1h-1zM324 459h1v1h-1zM324 471h1v1h-1zM324 483h1v1h-1zM324 495h1v1h-1zM324 507h1v1h-1zM474 51h1v1h-1zM474 63h1v1h-1zM474 75h1v1h-1zM474 87h1v1h-1zM474 111h1v1h-1zM474 123h1v1h-1zM474 135h1v1h-1zM474 147h1v1h-1zM474 171h1v1h-1zM474 183h1v1h-1zM474 195h1v1h-1zM474 207h1v1h-1zM474 219h1v1h-1zM474 231h1v1h-1zM474 243h1v1h-1zM474 255h1v1h-1zM474 267h1v1h-1zM474 279h1v1h-1zM474 291h1v1h-1zM474 303h1v1h-1zM474 315h1v1h-1zM474 327h1v1h-1zM474 339h1v1h-1zM474 351h1v1h-1zM474 363h1v1h-1zM474 375h1v1h-1zM474 387h1v1h-1zM474 399h1v1h-1zM474 411h1v1h-1zM474 423h1v1h-1zM474 435h1v1h-1zM474 447h1v1h-1zM474 459h1v1h-1zM474 471h1v1h-1zM474 483h1v1h-1zM474 495h1v1h-1zM474 507h1v1h-1zM549 51h1v1h-1zM549 63h1v1h-1zM549 75h1v1h-1zM549 87h1v1h-1zM549 99h1v1h-1zM549 111h1v1h-1zM549 123h1v1h-1zM549 135h1v1h-1zM549 147h1v1h-1zM549 159h1v1h-1zM549 183h1v1h-1zM549 195h1v1h-1zM549 207h1v1h-1zM549 219h1v1h-1zM549 243h1v1h-1zM549 255h1v1h-1zM549 267h1v1h-1zM549 279h1v1h-1zM549 291h1v1h-1zM549 303h1v1h-1zM549 315h1v1h-1zM549 327h1v1h-1zM549 339h1v1h-1zM549 351h1v1h-1zM549 363h1v1h-1zM549 375h1v1h-1zM549 387h1v1h-1zM549 399h1v1h-1zM549 411h1v1h-1zM549 423h1v1h-1zM549 435h1v1h-1zM549 447h1v1h-1zM549 459h1v1h-1zM549 471h1v1h-1zM549 483h1v1h-1zM549 495h1v1h-1zM549 507h1v1h-1zM624 51h1v1h-1zM624 63h1v1h-1zM624 75h1v1h-1zM624 87h1v1h-1zM624 99h1v1h-1zM624 111h1v1h-1zM624 123h1v1h-1zM624 135h1v1h-1zM624 147h1v1h-1zM624 159h1v1h-1zM624 171h1v1h-1zM624 183h1v1h-1zM624 195h1v1h-1zM624 207h1v1h-1zM624 219h1v1h-1zM624 231h1v1h-1zM624 243h1v1h-1zM624 255h1v1h-1zM624 267h1v1h-1zM624 279h1v1h-1zM624 291h1v1h-1zM624 303h1v1h-1zM624 327h1v1h-1zM624 339h1v1h-1zM624 351h1v1h-1zM624 363h1v1h-1zM624 375h1v1h-1zM624 387h1v1h-1zM624 399h1v1h-1zM624 411h1v1h-1zM624 423h1v1h-1zM624 435h1v1h-1zM624 447h1v1h-1zM624 459h1v1h-1zM624 471h1v1h-1zM624 483h1v1h-1zM624 495h1v1h-1zM624 507h1v1h-1zM699 51h1v1h-1zM699 63h1v1h-1zM699 75h1v1h-1zM699 87h1v1h-1zM699 99h1v1h-1zM699 111h1v1h-1zM699 123h1v1h-1zM699 135h1v1h-1zM699 147h1v1h-1zM699 159h1v1h-1zM699 171h1v1h-1zM699 183h1v1h-1zM699 195h1v1h-1zM699 207h1v1h-1zM699 219h1v1h-1zM699 231h1v1h-1zM699 243h1v1h-1zM699 255h1v1h-1zM699 267h1v1h-1zM699 279h1v1h-1zM699 291h1v1h-1zM699 303h1v1h-1zM699 315h1v1h-1zM699 327h1v1h-1zM699 339h1v1h-1zM699 351h1v1h-1zM699 363h1v1h-1zM699 387h1v1h-1zM699 399h1v1h-1zM699 411h1v1h-1zM699 423h1v1h-1zM699 435h1v1h-1zM699 447h1v1h-1zM699 459h1v1h-1zM699 471h1v1h-1zM699 483h1v1h-1zM699 495h1v1h-1zM699 507h1v1h-1zM39 99h1v1h-1zM54 99h1v1h-1zM69 99h1v1h-1zM84 99h1v1h-1zM99 99h1v1h-1zM129 99h1v1h-1zM144 99h1v1h-1zM159 99h1v1h-1zM174 99h1v1h-1zM189 99h1v1h-1zM204 99h1v1h-1zM219 99h1v1h-1zM234 99h1v1h-1zM249 99h1v1h-1zM264 99h1v1h-1zM279 99h1v1h-1zM294 99h1v1h-1zM309 99h1v1h-1zM324 99h1v1h-1zM339 99h1v1h-1zM354 99h1v1h-1zM369 99h1v1h-1zM384 99h1v1h-1zM399 99h1v1h-1zM414 99h1v1h-1zM429 99h1v1h-1zM444 99h1v1h-1zM459 99h1v1h-1zM504 99h1v1h-1zM519 99h1v1h-1zM534 99h1v1h-1zM549 99h1v1h-1zM564 99h1v1h-1zM579 99h1v1h-1zM594 99h1v1h-1zM609 99h1v1h-1zM624 99h1v1h-1zM639 99h1v1h-1zM654 99h1v1h-1zM669 99h1v1h-1zM684 99h1v1h-1zM699 99h1v1h-1zM714 99h1v1h-1zM729 99h1v1h-1zM744 99h1v1h-1zM759 99h1v1h-1zM39 159h1v1h-1zM69 159h1v1h-1zM84 159h1v1h-1zM144 159h1v1h-1zM159 159h1v1h-1zM189 159h1v1h-1zM204 159h1v1h-1zM219 159h1v1h-1zM234 159h1v1h-1zM249 159h1v1h-1zM264 159h1v1h-1zM279 159h1v1h-1zM294 159h1v1h-1zM309 159h1v1h-1zM324 159h1v1h-1zM339 159h1v1h-1zM354 159h1v1h-1zM369 159h1v1h-1zM384 159h1v1h-1zM399 159h1v1h-1zM414 159h1v1h-1zM429 159h1v1h-1zM444 159h1v1h-1zM459 159h1v1h-1zM504 159h1v1h-1zM519 159h1v1h-1zM534 159h1v1h-1zM549 159h1v1h-1zM564 159h1v1h-1zM579 159h1v1h-1zM594 159h1v1h-1zM609 159h1v1h-1zM624 159h1v1h-1zM639 159h1v1h-1zM654 159h1v1h-1zM669 159h1v1h-1zM684 159h1v1h-1zM699 159h1v1h-1zM714 159h1v1h-1zM729 159h1v1h-1zM744 159h1v1h-1zM759 159h1v1h-1zM39 219h1v1h-1zM54 219h1v1h-1zM69 219h1v1h-1zM84 219h1v1h-1zM99 219h1v1h-1zM114 219h1v1h-1zM129 219h1v1h-1zM144 219h1v1h-1zM159 219h1v1h-1zM174 219h1v1h-1zM189 219h1v1h-1zM219 219h1v1h-1zM234 219h1v1h-1zM249 219h1v1h-1zM264 219h1v1h-1zM279 219h1v1h-1zM294 219h1v1h-1zM309 219h1v1h-1zM324 219h1v1h-1zM339 219h1v1h-1zM354 219h1v1h-1zM369 219h1v1h-1zM384 219h1v1h-1zM399 219h1v1h-1zM414 219h1v1h-1zM429 219h1v1h-1zM444 219h1v1h-1zM459 219h1v1h-1zM474 219h1v1h-1zM489 219h1v1h-1zM504 219h1v1h-1zM519 219h1v1h-1zM534 219h1v1h-1zM549 219h1v1h-1zM564 219h1v1h-1zM579 219h1v1h-1zM594 219h1v1h-1zM609 219h1v1h-1zM624 219h1v1h-1zM639 219h1v1h-1zM654 219h1v1h-1zM669 219h1v1h-1zM684 219h1v1h-1zM699 219h1v1h-1zM714 219h1v1h-1zM729 219h1v1h-1zM744 219h1v1h-1zM759 219h1v1h-1zM39 339h1v1h-1zM54 339h1v1h-1zM69 339h1v1h-1zM84 339h1v1h-1zM99 339h1v1h-1zM114 339h1v1h-1zM129 339h1v1h-1zM144 339h1v1h-1zM159 339h1v1h-1zM174 339h1v1h-1zM189 339h1v1h-1zM204 339h1v1h-1zM219 339h1v1h-1zM234 339h1v1h-1zM249 339h1v1h-1zM264 339h1v1h-1zM324 339h1v1h-1zM339 339h1v1h-1zM354 339h1v1h-1zM369 339h1v1h-1zM384 339h1v1h-1zM399 339h1v1h-1zM414 339h1v1h-1zM429 339h1v1h-1zM444 339h1v1h-1zM459 339h1v1h-1zM474 339h1v1h-1zM489 339h1v1h-1zM504 339h1v1h-1zM519 339h1v1h-1zM534 339h1v1h-1zM549 339h1v1h-1zM564 339h1v1h-1zM579 339h1v1h-1zM594 339h1v1h-1zM609 339h1v1h-1zM624 339h1v1h-1zM639 339h1v1h-1zM684 339h1v1h-1zM699 339h1v1h-1zM714 339h1v1h-1zM729 339h1v1h-1zM744 339h1v1h-1zM759 339h1v1h-1zM39 399h1v1h-1zM54 399h1v1h-1zM69 399h1v1h-1zM84 399h1v1h-1zM99 399h1v1h-1zM114 399h1v1h-1zM129 399h1v1h-1zM144 399h1v1h-1zM159 399h1v1h-1zM174 399h1v1h-1zM189 399h1v1h-1zM204 399h1v1h-1zM219 399h1v1h-1zM234 399h1v1h-1zM249 399h1v1h-1zM264 399h1v1h-1zM279 399h1v1h-1zM324 399h1v1h-1zM339 399h1v1h-1zM354 399h1v1h-1zM369 399h1v1h-1zM384 399h1v1h-1zM399 399h1v1h-1zM414 399h1v1h-1zM429 399h1v1h-1zM444 399h1v1h-1zM459 399h1v1h-1zM474 399h1v1h-1zM489 399h1v1h-1zM504 399h1v1h-1zM519 399h1v1h-1zM534 399h1v1h-1zM549 399h1v1h-1zM564 399h1v1h-1zM579 399h1v1h-1zM594 399h1v1h-1zM609 399h1v1h-1zM624 399h1v1h-1zM639 399h1v1h-1zM684 399h1v1h-1zM699 399h1v1h-1zM714 399h1v1h-1zM729 399h1v1h-1zM744 399h1v1h-1zM759 399h1v1h-1zM39 459h1v1h-1zM54 459h1v1h-1zM69 459h1v1h-1zM84 459h1v1h-1zM99 459h1v1h-1zM114 459h1v1h-1zM129 459h1v1h-1zM144 459h1v1h-1zM159 459h1v1h-1zM174 459h1v1h-1zM189 459h1v1h-1zM204 459h1v1h-1zM219 459h1v1h-1zM234 459h1v1h-1zM249 459h1v1h-1zM264 459h1v1h-1zM279 459h1v1h-1zM294 459h1v1h-1zM309 459h1v1h-1zM324 459h1v1h-1zM339 459h1v1h-1zM354 459h1v1h-1zM369 459h1v1h-1zM384 459h1v1h-1zM399 459h1v1h-1zM414 459h1v1h-1zM429 459h1v1h-1zM444 459h1v1h-1zM459 459h1v1h-1zM474 459h1v1h-1zM489 459h1v1h-1zM504 459h1v1h-1zM519 459h1v1h-1zM534 459h1v1h-1zM549 459h1v1h-1zM564 459h1v1h-1zM579 459h1v1h-1zM594 459h1v1h-1zM609 459h1v1h-1zM624 459h1v1h-1zM639 459h1v1h-1zM654 459h1v1h-1zM669 459h1v1h-1zM684 459h1v1h-1zM699 459h1v1h-1zM714 459h1v1h-1zM729 459h1v1h-1zM744 459h1v1h-1zM759 459h1v1h-1zM398 51h1v1h-1zM399 51h1v1h-1zM400 51h1v1h-1zM398 63h1v1h-1zM399 63h1v1h-1zM400 63h1v1h-1zM398 75h1v1h-1zM399 75h1v1h-1zM400 75h1v1h-1zM398 87h1v1h-1zM399 87h1v1h-1zM400 87h1v1h-1zM398 99h1v1h-1zM399 99h1v1h-1zM400 99h1v1h-1zM398 111h1v1h-1zM399 111h1v1h-1zM400 111h1v1h-1zM398 123h1v1h-1zM399 123h1v1h-1zM400 123h1v1h-1zM398 135h1v1h-1zM399 135h1v1h-1zM400 135h1v1h-1zM398 147h1v1h-1zM399 147h1v1h-1zM400 147h1v1h-1zM398 159h1v1h-1zM399 159h1v1h-1zM400 159h1v1h-1zM398 171h1v1h-1zM399 171h1v1h-1zM400 171h1v1h-1zM398 183h1v1h-1zM399 183h1v1h-1zM400 183h1v1h-1zM398 195h1v1h-1zM398 207h1v1h-1zM399 207h1v1h-1zM400 207h1v1h-1zM398 219h1v1h-1zM399 219h1v1h-1zM400 219h1v1h-1zM398 231h1v1h-1zM399 231h1v1h-1zM400 231h1v1h-1zM398 243h1v1h-1zM399 243h1v1h-1zM400 243h1v1h-1zM398 267h1v1h-1zM399 267h1v1h-1zM400 267h1v1h-1zM398 279h1v1h-1zM399 279h1v1h-1zM400 279h1v1h-1zM398 291h1v1h-1zM399 291h1v1h-1zM400 291h1v1h-1zM398 303h1v1h-1zM399 303h1v1h-1zM400 303h1v1h-1zM398 315h1v1h-1zM399 315h1v1h-1zM400 315h1v1h-1zM398 327h1v1h-1zM399 327h1v1h-1zM400 327h1v1h-1zM398 339h1v1h-1zM399 339h1v1h-1zM400 339h1v1h-1zM398 351h1v1h-1zM399 351h1v1h-1zM400 351h1v1h-1zM398 363h1v1h-1zM399 363h1v1h-1zM400 363h1v1h-1zM398 375h1v1h-1zM399 375h1v1h-1zM400 375h1v1h-1zM398 387h1v1h-1zM399 387h1v1h-1zM400 387h1v1h-1zM398 399h1v1h-1zM399 399h1v1h-1zM400 399h1v1h-1zM398 411h1v1h-1zM399 411h1v1h-1zM400 411h1v1h-1zM398 423h1v1h-1zM399 423h1v1h-1zM400 423h1v1h-1zM398 435h1v1h-1zM399 435h1v1h-1zM400 435h1v1h-1zM398 447h1v1h-1zM399 447h1v1h-1zM400 447h1v1h-1zM398 459h1v1h-1zM399 459h1v1h-1zM400 459h1v1h-1zM398 471h1v1h-1zM399 471h1v1h-1zM400 471h1v1h-1zM398 483h1v1h-1zM399 483h1v1h-1zM400 483h1v1h-1zM398 495h1v1h-1zM399 495h1v1h-1zM400 495h1v1h-1zM398 507h1v1h-1zM399 507h1v1h-1zM400 507h1v1h-1zM39 278h1v1h-1zM39 279h1v1h-1zM39 280h1v1h-1zM54 278h1v1h-1zM54 279h1v1h-1zM54 280h1v1h-1zM69 278h1v1h-1zM69 279h1v1h-1zM69 280h1v1h-1zM84 278h1v1h-1zM84 279h1v1h-1zM84 280h1v1h-1zM99 278h1v1h-1zM99 279h1v1h-1zM99 280h1v1h-1zM114 278h1v1h-1zM114 279h1v1h-1zM114 280h1v1h-1zM129 278h1v1h-1zM129 279h1v1h-1zM129 280h1v1h-1zM144 278h1v1h-1zM144 279h1v1h-1zM144 280h1v1h-1zM159 278h1v1h-1zM159 279h1v1h-1zM159 280h1v1h-1zM174 278h1v1h-1zM174 279h1v1h-1zM174 280h1v1h-1zM189 278h1v1h-1zM189 279h1v1h-1zM189 280h1v1h-1zM204 278h1v1h-1zM204 279h1v1h-1zM204 280h1v1h-1zM219 278h1v1h-1zM219 279h1v1h-1zM219 280h1v1h-1zM249 278h1v1h-1zM249 279h1v1h-1zM249 280h1v1h-1zM264 278h1v1h-1zM264 279h1v1h-1zM264 280h1v1h-1zM279 278h1v1h-1zM279 279h1v1h-1zM279 280h1v1h-1zM294 278h1v1h-1zM294 279h1v1h-1zM294 280h1v1h-1zM309 278h1v1h-1zM309 279h1v1h-1zM309 280h1v1h-1zM324 278h1v1h-1zM324 279h1v1h-1zM324 280h1v1h-1zM339 278h1v1h-1zM339 279h1v1h-1zM339 280h1v1h-1zM354 278h1v1h-1zM354 279h1v1h-1zM354 280h1v1h-1zM369 278h1v1h-1zM369 279h1v1h-1zM369 280h1v1h-1zM384 278h1v1h-1zM384 279h1v1h-1zM384 280h1v1h-1zM399 278h1v1h-1zM399 279h1v1h-1zM399 280h1v1h-1zM414 278h1v1h-1zM414 279h1v1h-1zM414 280h1v1h-1zM429 278h1v1h-1zM429 279h1v1h-1zM429 280h1v1h-1zM444 278h1v1h-1zM444 279h1v1h-1zM444 280h1v1h-1zM459 278h1v1h-1zM459 279h1v1h-1zM459 280h1v1h-1zM474 278h1v1h-1zM474 279h1v1h-1zM474 280h1v1h-1zM489 278h1v1h-1zM489 279h1v1h-1zM489 280h1v1h-1zM504 278h1v1h-1zM504 279h1v1h-1zM504 280h1v1h-1zM519 278h1v1h-1zM519 279h1v1h-1zM519 280h1v1h-1zM534 278h1v1h-1zM534 279h1v1h-1zM534 280h1v1h-1zM549 278h1v1h-1zM549 279h1v1h-1zM549 280h1v1h-1zM564 278h1v1h-1zM564 279h1v1h-1zM564 280h1v1h-1zM579 278h1v1h-1zM579 279h1v1h-1zM579 280h1v1h-1zM594 278h1v1h-1zM594 279h1v1h-1zM594 280h1v1h-1zM609 278h1v1h-1zM609 279h1v1h-1zM609 280h1v1h-1zM624 278h1v1h-1zM624 279h1v1h-1zM624 280h1v1h-1zM639 278h1v1h-1zM639 279h1v1h-1zM639 280h1v1h-1zM654 278h1v1h-1zM654 279h1v1h-1zM654 280h1v1h-1zM669 278h1v1h-1zM669 279h1v1h-1zM669 280h1v1h-1zM684 278h1v1h-1zM684 279h1v1h-1zM684 280h1v1h-1zM699 278h1v1h-1zM699 279h1v1h-1zM699 280h1v1h-1zM714 278h1v1h-1zM714 279h1v1h-1zM714 280h1v1h-1zM729 278h1v1h-1zM729 279h1v1h-1zM729 280h1v1h-1zM744 278h1v1h-1zM744 279h1v1h-1zM744 280h1v1h-1zM759 278h1v1h-1zM759 279h1v1h-1zM759 280h1v1h-1zM397 279h1v1h-1zM398 279h1v1h-1zM399 279h1v1h-1zM400 279h1v1h-1zM401 279h1v1h-1zM399 277h1v1h-1zM399 278h1v1h-1zM399 279h1v1h-1zM399 280h1v1h-1zM399 281h1v1h-1zM39 40h1v1h-1zM39 41h1v1h-1zM39 517h1v1h-1zM39 518h1v1h-1zM54 40h1v1h-1zM54 41h1v1h-1zM54 517h1v1h-1zM54 518h1v1h-1zM69 40h1v1h-1zM69 41h1v1h-1zM69 517h1v1h-1zM69 518h1v1h-1zM84 40h1v1h-1zM84 41h1v1h-1zM84 517h1v1h-1zM84 518h1v1h-1zM99 40h1v1h-1zM99 41h1v1h-1zM99 42h1v1h-1zM99 43h1v1h-1zM99 515h1v1h-1zM99 516h1v1h-1zM99 517h1v1h-1zM99 518h1v1h-1zM114 40h1v1h-1zM114 41h1v1h-1zM114 517h1v1h-1zM114 518h1v1h-1zM129 40h1v1h-1zM129 41h1v1h-1zM129 517h1v1h-1zM129 518h1v1h-1zM144 40h1v1h-1zM144 41h1v1h-1zM144 517h1v1h-1zM144 518h1v1h-1zM159 40h1v1h-1zM159 41h1v1h-1zM159 517h1v1h-1zM159 518h1v1h-1zM174 40h1v1h-1zM174 41h1v1h-1zM174 42h1v1h-1zM174 43h1v1h-1zM174 515h1v1h-1zM174 516h1v1h-1zM174 517h1v1h-1zM174 518h1v1h-1zM189 40h1v1h-1zM189 41h1v1h-1zM189 517h1v1h-1zM189 518h1v1h-1zM204 40h1v1h-1zM204 41h1v1h-1zM204 517h1v1h-1zM204 518h1v1h-1zM219 40h1v1h-1zM219 41h1v1h-1zM219 517h1v1h-1zM219 518h1v1h-1zM234 40h1v1h-1zM234 41h1v1h-1zM234 517h1v1h-1zM234 518h1v1h-1zM249 40h1v1h-1zM249 41h1v1h-1zM249 42h1v1h-1zM249 43h1v1h-1zM249 515h1v1h-1zM249 516h1v1h-1zM249 517h1v1h-1zM249 518h1v1h-1zM264 40h1v1h-1zM264 41h1v1h-1zM264 517h1v1h-1zM264 518h1v1h-1zM279 40h1v1h-1zM279 41h1v1h-1zM279 517h1v1h-1zM279 518h1v1h-1zM294 40h1v1h-1zM294 41h1v1h-1zM294 517h1v1h-1zM294 518h1v1h-1zM309 40h1v1h-1zM309 41h1v1h-1zM309 517h1v1h-1zM309 518h1v1h-1zM324 40h1v1h-1zM324 41h1v1h-1zM324 42h1v1h-1zM324 43h1v1h-1zM324 515h1v1h-1zM324 516h1v1h-1zM324 517h1v1h-1zM324 518h1v1h-1zM339 40h1v1h-1zM339 41h1v1h-1zM339 517h1v1h-1zM339 518h1v1h-1zM354 40h1v1h-1zM354 41h1v1h-1zM354 517h1v1h-1zM354 518h1v1h-1zM369 40h1v1h-1zM369 41h1v1h-1zM369 517h1v1h-1zM369 518h1v1h-1zM384 40h1v1h-1zM384 41h1v1h-1zM384 517h1v1h-1zM384 518h1v1h-1zM399 40h1v1h-1zM399 41h1v1h-1zM399 42h1v1h-1zM399 43h1v1h-1zM399 515h1v1h-1zM399 516h1v1h-1zM399 517h1v1h-1zM399 518h1v1h-1zM414 40h1v1h-1zM414 41h1v1h-1zM414 517h1v1h-1zM414 518h1v1h-1zM429 40h1v1h-1zM429 41h1v1h-1zM429 517h1v1h-1zM429 518h1v1h-1zM444 40h1v1h-1zM444 41h1v1h-1zM444 517h1v1h-1zM444 518h1v1h-1zM459 40h1v1h-1zM459 41h1v1h-1zM459 517h1v1h-1zM459 518h1v1h-1zM474 40h1v1h-1zM474 41h1v1h-1zM474 42h1v1h-1zM474 43h1v1h-1zM474 515h1v1h-1zM474 516h1v1h-1zM474 517h1v1h-1zM474 518h1v1h-1zM489 40h1v1h-1zM489 41h1v1h-1zM489 517h1v1h-1zM489 518h1v1h-1zM504 40h1v1h-1zM504 41h1v1h-1zM504 517h1v1h-1zM504 518h1v1h-1zM519 40h1v1h-1zM519 41h1v1h-1zM519 517h1v1h-1zM519 518h1v1h-1zM534 40h1v1h-1zM534 41h1v1h-1zM534 517h1v1h-1zM534 518h1v1h-1zM549 40h1v1h-1zM549 41h1v1h-1zM549 42h1v1h-1zM549 43h1v1h-1zM549 515h1v1h-1zM549 516h1v1h-1zM549 517h1v1h-1zM549 518h1v1h-1zM564 40h1v1h-1zM564 41h1v1h-1zM564 517h1v1h-1zM564 518h1v1h-1zM579 40h1v1h-1zM579 41h1v1h-1zM579 517h1v1h-1zM579 518h1v1h-1zM594 40h1v1h-1zM594 41h1v1h-1zM594 517h1v1h-1zM594 518h1v1h-1zM609 40h1v1h-1zM609 41h1v1h-1zM609 517h1v1h-1zM609 518h1v1h-1zM624 40h1v1h-1zM624 41h1v1h-1zM624 42h1v1h-1zM624 43h1v1h-1zM624 515h1v1h-1zM624 516h1v1h-1zM624 517h1v1h-1zM624 518h1v1h-1zM639 40h1v1h-1zM639 41h1v1h-1zM639 517h1v1h-1zM639 518h1v1h-1zM654 40h1v1h-1zM654 41h1v1h-1zM654 517h1v1h-1zM654 518h1v1h-1zM669 40h1v1h-1zM669 41h1v1h-1zM669 517h1v1h-1zM669 518h1v1h-1zM684 40h1v1h-1zM684 41h1v1h-1zM684 517h1v1h-1zM684 518h1v1h-1zM699 40h1v1h-1zM699 41h1v1h-1zM699 42h1v1h-1zM699 43h1v1h-1zM699 515h1v1h-1zM699 516h1v1h-1zM699 517h1v1h-1zM699 518h1v1h-1zM714 40h1v1h-1zM714 41h1v1h-1zM714 517h1v1h-1zM714 518h1v1h-1zM729 40h1v1h-1zM729 41h1v1h-1zM729 517h1v1h-1zM729 518h1v1h-1zM744 40h1v1h-1zM744 41h1v1h-1zM744 517h1v1h-1zM744 518h1v1h-1zM759 40h1v1h-1zM759 41h1v1h-1zM759 517h1v1h-1zM759 518h1v1h-1zM25 51h1v1h-1zM26 51h1v1h-1zM772 51h1v1h-1zM773 51h1v1h-1zM25 63h1v1h-1zM26 63h1v1h-1zM772 63h1v1h-1zM773 63h1v1h-1zM25 75h1v1h-1zM26 75h1v1h-1zM772 75h1v1h-1zM773 75h1v1h-1zM25 87h1v1h-1zM26 87h1v1h-1zM772 87h1v1h-1zM773 87h1v1h-1zM25 99h1v1h-1zM26 99h1v1h-1zM27 99h1v1h-1zM28 99h1v1h-1zM770 99h1v1h-1zM771 99h1v1h-1zM772 99h1v1h-1zM773 99h1v1h-1zM25 111h1v1h-1zM26 111h1v1h-1zM772 111h1v1h-1zM773 111h1v1h-1zM25 123h1v1h-1zM26 123h1v1h-1zM772 123h1v1h-1zM773 123h1v1h-1zM25 135h1v1h-1zM26 135h1v1h-1zM772 135h1v1h-1zM773 135h1v1h-1zM25 147h1v1h-1zM26 147h1v1h-1zM772 147h1v1h-1zM773 147h1v1h-1zM25 159h1v1h-1zM26 159h1v1h-1zM27 159h1v1h-1zM28 159h1v1h-1zM770 159h1v1h-1zM771 159h1v1h-1zM772 159h1v1h-1zM773 159h1v1h-1zM25 171h1v1h-1zM26 171h1v1h-1zM772 171h1v1h-1zM773 171h1v1h-1zM25 183h1v1h-1zM26 183h1v1h-1zM25 195h1v1h-1zM26 195h1v1h-1zM772 195h1v1h-1zM773 195h1v1h-1zM25 207h1v1h-1zM772 207h1v1h-1zM773 207h1v1h-1zM25 219h1v1h-1zM26 219h1v1h-1zM27 219h1v1h-1zM28 219h1v1h-1zM770 219h1v1h-1zM771 219h1v1h-1zM772 219h1v1h-1zM773 219h1v1h-1zM25 231h1v1h-1zM26 231h1v1h-1zM772 231h1v1h-1zM773 231h1v1h-1zM25 243h1v1h-1zM26 243h1v1h-1zM25 255h1v1h-1zM26 255h1v1h-1zM772 255h1v1h-1zM773 255h1v1h-1zM772 267h1v1h-1zM773 267h1v1h-1zM25 279h1v1h-1zM26 279h1v1h-1zM27 279h1v1h-1zM28 279h1v1h-1zM770 279h1v1h-1zM771 279h1v1h-1zM772 279h1v1h-1zM773 279h1v1h-1zM25 291h1v1h-1zM26 291h1v1h-1zM772 291h1v1h-1zM773 291h1v1h-1zM25 303h1v1h-1zM26 303h1v1h-1zM772 303h1v1h-1zM773 303h1v1h-1zM25 315h1v1h-1zM26 315h1v1h-1zM772 315h1v1h-1zM773 315h1v1h-1zM25 327h1v1h-1zM26 327h1v1h-1zM772 327h1v1h-1zM773 327h1v1h-1zM25 339h1v1h-1zM26 339h1v1h-1zM27 339h1v1h-1zM28 339h1v1h-1zM770 339h1v1h-1zM771 339h1v1h-1zM772 339h1v1h-1zM773 339h1v1h-1zM25 351h1v1h-1zM26 351h1v1h-1zM772 351h1v1h-1zM773 351h1v1h-1zM25 363h1v1h-1zM26 363h1v1h-1zM772 363h1v1h-1zM773 363h1v1h-1zM25 375h1v1h-1zM26 375h1v1h-1zM772 375h1v1h-1zM773 375h1v1h-1zM25 387h1v1h-1zM26 387h1v1h-1zM772 387h1v1h-1zM773 387h1v1h-1zM25 399h1v1h-1zM26 399h1v1h-1zM27 399h1v1h-1zM28 399h1v1h-1zM770 399h1v1h-1zM771 399h1v1h-1zM772 399h1v1h-1zM773 399h1v1h-1zM25 411h1v1h-1zM26 411h1v1h-1zM772 411h1v1h-1zM773 411h1v1h-1zM25 423h1v1h-1zM26 423h1v1h-1zM772 423h1v1h-1zM773 423h1v1h-1zM25 435h1v1h-1zM26 435h1v1h-1zM772 435h1v1h-1zM773 435h1v1h-1zM25 447h1v1h-1zM26 447h1v1h-1zM772 447h1v1h-1zM773 447h1v1h-1zM25 459h1v1h-1zM26 459h1v1h-1zM27 459h1v1h-1zM28 459h1v1h-1zM770 459h1v1h-1zM771 459h1v1h-1zM772 459h1v1h-1zM773 459h1v1h-1zM25 471h1v1h-1zM26 471h1v1h-1zM772 471h1v1h-1zM773 471h1v1h-1zM25 483h1v1h-1zM26 483h1v1h-1zM772 483h1v1h-1zM773 483h1v1h-1zM25 495h1v1h-1zM26 495h1v1h-1zM772 495h1v1h-1zM773 495h1v1h-1zM25 507h1v1h-1zM26 507h1v1h-1zM772 507h1v1h-1zM773 507h1v1h-1z" fill="#909090"/>
<path d="M99 159h1v1h-1zM324 387h1v1h-1zM474 159h1v1h-1zM549 231h1v1h-1zM699 375h1v1h-1zM99 159h1v1h-1zM114 159h1v1h-1zM129 159h1v1h-1zM474 159h1v1h-1zM489 159h1v1h-1zM294 399h1v1h-1zM309 399h1v1h-1zM654 399h1v1h-1zM669 399h1v1h-1zM398 255h1v1h-1zM399 255h1v1h-1zM400 255h1v1h-1zM772 243h1v1h-1zM773 243h1v1h-1zM25 267h1v1h-1zM26 267h1v1h-1z" fill="#906f6f"/>
<path d="M174 159h1v1h-1zM249 303h1v1h-1zM324 327h1v1h-1zM474 99h1v1h-1zM549 171h1v1h-1zM624 315h1v1h-1zM114 99h1v1h-1zM474 99h1v1h-1zM489 99h1v1h-1zM54 159h1v1h-1zM174 159h1v1h-1zM204 219h1v1h-1zM279 339h1v1h-1zM294 339h1v1h-1zM309 339h1v1h-1zM654 339h1v1h-1zM669 339h1v1h-1zM399 195h1v1h-1zM400 195h1v1h-1zM234 278h1v1h-1zM234 279h1v1h-1zM234 280h1v1h-1zM772 183h1v1h-1zM773 183h1v1h-1zM26 207h1v1h-1z" fill="#6f5c90"/>
<path d="M392 40h15v1h-15zM393 41h13v1h-13zM394 42h11v1h-11zM395 43h9v1h-9zM396 44h7v1h-7zM397 45h5v1h-5zM398 46h3v1h-3zM399 47h1v1h-1z" fill="#ff3300"/>
<path d="M773 194h1v1h-1zM772 195h2v1h-2zM771 196h3v1h-3zM770 197h4v1h-4zM769 198h5v1h-5zM768 199h6v1h-6zM767 200h7v1h-7zM768 201h6v1h-6zM769 202h5v1h-5zM770 203h4v1h-4zM771 204h3v1h-3zM772 205h2v1h-2zM773 206h1v1h-1z" fill="#ffcc00"/>
<path d="M3 213h16v1h-16zM3 214h1v1h-1zM19 214h1v1h-1zM3 215h1v1h-1zM19 215h1v1h-1zM3 216h1v1h-1zM20 216h1v1h-1zM3 217h1v1h-1zM21 217h1v1h-1zM3 218h1v1h-1zM21 218h1v1h-1zM3 219h1v1h-1zM22 219h1v1h-1zM3 220h1v1h-1zM21 220h1v1h-1zM3 221h1v1h-1zM21 221h1v1h-1zM3 222h1v1h-1zM20 222h1v1h-1zM3 223h1v1h-1zM19 223h1v1h-1zM3 224h1v1h-1zM19 224h1v1h-1zM3 225h16v1h-16z" fill="#ffcc00"/>
<path d="M12 215h2v1h-2zM11 216h3v1h-3zM10 217h4v1h-4zM10 218h1v1h-1zM12 218h2v1h-2zM12 219h2v1h-2zM12 220h2v1h-2zM12 221h2v1h-2zM12 222h2v1h-2zM12 223h2v1h-2z" fill="#ffcc00"/>
<path d="M3 273h16v1h-16zM3 274h17v1h-17zM3 275h17v1h-17zM3 276h18v1h-18zM3 277h19v1h-19zM3 278h19v1h-19zM3 279h20v1h-20zM3 280h19v1h-19zM3 281h19v1h-19zM3 282h18v1h-18zM3 283h17v1h-17zM3 284h17v1h-17zM3 285h16v1h-16z" fill="#000"/>
<path d="M4 274h15v1h-15zM4 275h15v1h-15zM4 276h16v1h-16zM4 277h17v1h-17zM4 278h17v1h-17zM4 279h18v1h-18zM4 280h17v1h-17zM4 281h17v1h-17zM4 282h16v1h-16zM4 283h15v1h-15zM4 284h15v1h-15z" fill="#00ffff"/>
<path d="M10 275h4v1h-4zM9 276h2v1h-2zM13 276h2v1h-2zM9 277h1v1h-1zM13 277h2v1h-2zM12 278h2v1h-2zM11 279h2v1h-2zM10 280h2v1h-2zM9 281h2v1h-2zM9 282h6v1h-6zM9 283h6v1h-6z" fill="#000"/>
<path d="M647 498h122v1h-122zM645 499h126v1h-126zM644 500h128v1h-128zM643 501h130v1h-130zM643 502h130v1h-130zM643 503h130v1h-130zM643 504h130v1h-130zM643 505h130v1h-130zM643 506h130v1h-130zM643 507h130v1h-130zM643 508h130v1h-130zM643 509h130v1h-130zM643 510h130v1h-130zM643 511h130v1h-130zM643 512h130v1h-130zM643 513h130v1h-130zM643 514h130v1h-130zM644 515h128v1h-128zM645 516h126v1h-126zM647 517h122v1h-122z" fill="#ffffff"/><path d="M647 499h122v1h-122zM645 500h126v1h-126zM644 501h128v1h-128zM644 502h128v1h-128zM644 503h128v1h-128zM644 504h128v1h-128zM644 505h128v1h-128zM644 506h128v1h-128zM644 507h128v1h-128zM644 508h128v1h-128zM644 509h128v1h-128zM644 510h128v1h-128zM644 511h128v1h-128zM644 512h128v1h-128zM644 513h128v1h-128zM644 514h128v1h-128zM645 515h126v1h-126zM647 516h122v1h-122z" fill="#000"/>
<path d="M649 500h15v1h-15zM647 501h19v1h-19zM646 502h21v1h-21zM645 503h23v1h-23zM645 504h23v1h-23zM645 505h23v1h-23zM645 506h23v1h-23zM645 507h23v1h-23zM645 508h23v1h-23zM645 509h23v1h-23zM645 510h23v1h-23zM645 511h23v1h-23zM646 512h21v1h-21zM647 513h19v1h-19zM649 514h15v1h-15z" fill="#fff"/>
<path d="M653 502h8v2h-8z M653 502h2v12h-2z M653 507h7v2h-7z" fill="#000"/>
<rect x="24" y="9" width="12" height="3" fill="#ffffff"/><rect x="24" y="9" width="3" height="13" fill="#ffffff"/><rect x="24" y="19" width="12" height="3" fill="#ffffff"/><rect x="33" y="14" width="3" height="8" fill="#ffffff"/><rect x="30" y="14" width="6" height="2" fill="#ffffff"/><rect x="37" y="11" width="3" height="7" fill="#ffffff"/><rect x="42" y="11" width="2" height="7" fill="#ffffff"/><rect x="47" y="11" width="3" height="7" fill="#ffffff"/><rect x="37" y="15" width="13" height="3" fill="#ffffff"/><rect x="37" y="19" width="13" height="3" fill="#dc6c0c"/><rect x="53" y="9" width="3" height="13" fill="#ffffff"/><rect x="58" y="9" width="3" height="13" fill="#ffffff"/><rect x="58" y="9" width="11" height="3" fill="#ffffff"/><rect x="66" y="9" width="3" height="13" fill="#ffffff"/><rect x="70" y="9" width="10" height="3" fill="#ffffff"/><rect x="70" y="9" width="3" height="7" fill="#ffffff"/><rect x="70" y="14" width="10" height="3" fill="#ffffff"/><rect x="77" y="14" width="3" height="8" fill="#ffffff"/><rect x="70" y="19" width="10" height="3" fill="#ffffff"/><rect x="79" y="9" width="12" height="3" fill="#ffffff"/><rect x="83" y="9" width="3" height="13" fill="#ffffff"/><rect x="91" y="9" width="10" height="3" fill="#ffffff"/><rect x="91" y="9" width="3" height="13" fill="#ffffff"/><rect x="91" y="14" width="9" height="3" fill="#ffffff"/><rect x="91" y="19" width="10" height="3" fill="#ffffff"/><rect x="103" y="9" width="3" height="13" fill="#ffffff"/><rect x="103" y="14" width="6" height="3" fill="#ffffff"/><polygon points="106,14 110,9 114,9 109,15.5 114,22 110,22 106,17" fill="#ffffff"/>
<rect x="249" y="7" width="300" height="26" fill="#ffffff"/>
<rect x="250" y="8" width="298" height="24" fill="#000"/>
<path d="M299 10h200v2h-200z M299 28h200v2h-200z M299 10h2v20h-2z M497 10h2v20h-2z" fill="#dc6c0c"/>
<polyline points="301,18.8 302,19.6 303,20.5 304,21.4 305,22.3 306,23.1 307,23.7 308,24.2 309,24.5 310,24.5 311,24.3 312,23.8 313,23.2 314,22.4 315,21.5 316,20.6 317,19.7 318,18.9 319,18.3 320,17.8 321,17.5 322,17.5 323,17.7 324,18.2 325,18.8 326,19.6 327,20.5 328,21.4 329,22.3 330,23.1 331,23.7 332,24.2 333,24.5 334,24.5 335,24.3 336,23.8 337,23.2 338,22.4 339,21.5 340,20.6 341,19.7 342,18.9 343,18.3 344,17.8 345,17.5 346,17.5 347,17.7 348,18.2 349,18.8 350,19.6 351,20.5 352,21.4 353,22.3 354,23.1 355,23.7 356,24.2 357,24.5 358,24.5 359,24.3 360,23.8 361,23.2 362,22.4 363,21.5 364,20.6 365,19.7 366,18.9 367,18.3 368,17.8 369,17.5 370,17.5 371,17.7 372,18.2 373,18.8 374,19.6 375,20.5 376,21.4 377,22.3 378,23.1 379,23.7 380,24.2 381,24.5 382,24.5 383,24.3 384,23.8 385,23.2 386,22.4 387,21.5 388,20.6 389,19.7 390,18.9 391,18.3 392,17.8 393,17.5 394,17.5 395,17.7 396,18.2 397,18.8 398,19.6 399,20.5 400,21.4 401,22.3 402,23.1 403,23.7 404,24.2 405,24.5 406,24.5 407,24.3 408,23.8 409,23.2 410,22.4 411,21.5 412,20.6 413,19.7 414,18.9 415,18.3 416,17.8 417,17.5 418,17.5 419,17.7 420,18.2 421,18.8 422,19.6 423,20.5 424,21.4 425,22.3 426,23.1 427,23.7 428,24.2 429,24.5 430,24.5 431,24.3 432,23.8 433,23.2 434,22.4 435,21.5 436,20.6 437,19.7 438,18.9 439,18.3 440,17.8 441,17.5 442,17.5 443,17.7 444,18.2 445,18.8 446,19.6 447,20.5 448,21.4 449,22.3 450,23.1 451,23.7 452,24.2 453,24.5 454,24.5 455,24.3 456,23.8 457,23.2 458,22.4 459,21.5 460,20.6 461,19.7 462,18.9 463,18.3 464,17.8 465,17.5 466,17.5 467,17.7 468,18.2 469,18.8 470,19.6 471,20.5 472,21.4 473,22.3 474,23.1 475,23.7 476,24.2 477,24.5 478,24.5 479,24.3 480,23.8 481,23.2 482,22.4 483,21.5 484,20.6 485,19.7 486,18.9 487,18.3 488,17.8 489,17.5 490,17.5 491,17.7 492,18.2 493,18.8 494,19.6 495,20.5 496,21.4 497,22.3" fill="none" stroke="#00ffff" stroke-width="1.3" shape-rendering="auto"/>
<path d="M397 8h5v1h-5zM398 9h3v1h-3zM399 10h1v1h-1zM399 11h1v1h-1zM399 12h1v1h-1zM399 13h1v1h-1z" fill="#00ffff"/>
<path d="M562 7h42v1h-42zM560 8h46v1h-46zM559 9h48v1h-48zM558 10h50v1h-50zM558 11h50v1h-50zM558 12h50v1h-50zM558 13h50v1h-50zM558 14h50v1h-50zM558 15h50v1h-50zM558 16h50v1h-50zM558 17h50v1h-50zM558 18h50v1h-50zM558 19h50v1h-50zM558 20h50v1h-50zM558 21h50v1h-50zM558 22h50v1h-50zM558 23h50v1h-50zM558 24h50v1h-50zM558 25h50v1h-50zM558 26h50v1h-50zM558 27h50v1h-50zM558 28h50v1h-50zM558 29h50v1h-50zM559 30h48v1h-48zM560 31h46v1h-46zM562 32h42v1h-42z" fill="#ff0a14"/><path d="M562 8h42v1h-42zM560 9h46v1h-46zM559 10h48v1h-48zM559 11h48v1h-48zM559 12h48v1h-48zM559 13h48v1h-48zM559 14h48v1h-48zM559 15h48v1h-48zM559 16h48v1h-48zM559 17h48v1h-48zM559 18h48v1h-48zM559 19h48v1h-48zM559 20h48v1h-48zM559 21h48v1h-48zM559 22h48v1h-48zM559 23h48v1h-48zM559 24h48v1h-48zM559 25h48v1h-48zM559 26h48v1h-48zM559 27h48v1h-48zM559 28h48v1h-48zM559 29h48v1h-48zM560 30h46v1h-46zM562 31h42v1h-42z" fill="#004283"/>
<text x="566.5" y="24" fill="#ff0a14" font-family="Liberation Sans" font-weight="bold" font-size="15" textLength="31.5" lengthAdjust="spacingAndGlyphs">Stop</text>
<path d="M621 7h30v1h-30zM619 8h34v1h-34zM618 9h36v1h-36zM617 10h38v1h-38zM617 11h38v1h-38zM617 12h38v1h-38zM617 13h38v1h-38zM617 14h38v1h-38zM617 15h38v1h-38zM617 16h38v1h-38zM617 17h38v1h-38zM617 18h38v1h-38zM617 19h38v1h-38zM617 20h38v1h-38zM617 21h38v1h-38zM617 22h38v1h-38zM617 23h38v1h-38zM617 24h38v1h-38zM617 25h38v1h-38zM617 26h38v1h-38zM617 27h38v1h-38zM617 28h38v1h-38zM617 29h38v1h-38zM618 30h36v1h-36zM619 31h34v1h-34zM621 32h30v1h-30z" fill="#60ec9e"/><path d="M621 8h30v1h-30zM619 9h34v1h-34zM618 10h36v1h-36zM618 11h36v1h-36zM618 12h36v1h-36zM618 13h36v1h-36zM618 14h36v1h-36zM618 15h36v1h-36zM618 16h36v1h-36zM618 17h36v1h-36zM618 18h36v1h-36zM618 19h36v1h-36zM618 20h36v1h-36zM618 21h36v1h-36zM618 22h36v1h-36zM618 23h36v1h-36zM618 24h36v1h-36zM618 25h36v1h-36zM618 26h36v1h-36zM618 27h36v1h-36zM618 28h36v1h-36zM618 29h36v1h-36zM619 30h34v1h-34zM621 31h30v1h-30z" fill="#004283"/>
<path d="M628 13h2v1h-2zM632 13h2v1h-2zM636 13h2v1h-2zM640 13h2v1h-2zM627 14h17v1h-17zM627 15h17v1h-17zM627 16h2v1h-2zM630 16h2v1h-2zM634 16h2v1h-2zM638 16h2v1h-2zM642 16h2v1h-2zM627 17h2v1h-2zM641 17h2v1h-2zM627 18h2v1h-2zM641 18h2v1h-2zM627 19h2v1h-2zM641 19h2v1h-2zM627 20h2v1h-2zM641 20h2v1h-2zM627 21h2v1h-2zM641 21h2v1h-2zM627 22h2v1h-2zM641 22h2v1h-2zM627 23h2v1h-2zM641 23h2v1h-2zM627 24h2v1h-2zM641 24h2v1h-2zM624 25h5v1h-5zM641 25h6v1h-6zM624 26h5v1h-5zM641 26h6v1h-6z" fill="#60ec9e"/>
<path d="M673 2h98v1h-98zM671 3h102v1h-102zM670 4h104v1h-104zM669 5h106v1h-106zM669 6h106v1h-106zM669 7h106v1h-106zM669 8h106v1h-106zM669 9h106v1h-106zM669 10h106v1h-106zM669 11h106v1h-106zM669 12h106v1h-106zM669 13h106v1h-106zM669 14h106v1h-106zM669 15h106v1h-106zM669 16h106v1h-106zM669 17h106v1h-106zM669 18h106v1h-106zM669 19h106v1h-106zM669 20h106v1h-106zM669 21h106v1h-106zM669 22h106v1h-106zM669 23h106v1h-106zM669 24h106v1h-106zM669 25h106v1h-106zM669 26h106v1h-106zM669 27h106v1h-106zM669 28h106v1h-106zM669 29h106v1h-106zM669 30h106v1h-106zM669 31h106v1h-106zM669 32h106v1h-106zM669 33h106v1h-106zM669 34h106v1h-106zM670 35h104v1h-104zM671 36h102v1h-102zM673 37h98v1h-98z" fill="#ffffff"/><path d="M673 3h98v1h-98zM671 4h102v1h-102zM670 5h104v1h-104zM670 6h104v1h-104zM670 7h104v1h-104zM670 8h104v1h-104zM670 9h104v1h-104zM670 10h104v1h-104zM670 11h104v1h-104zM670 12h104v1h-104zM670 13h104v1h-104zM670 14h104v1h-104zM670 15h104v1h-104zM670 16h104v1h-104zM670 17h104v1h-104zM670 18h104v1h-104zM670 19h104v1h-104zM670 20h104v1h-104zM670 21h104v1h-104zM670 22h104v1h-104zM670 23h104v1h-104zM670 24h104v1h-104zM670 25h104v1h-104zM670 26h104v1h-104zM670 27h104v1h-104zM670 28h104v1h-104zM670 29h104v1h-104zM670 30h104v1h-104zM670 31h104v1h-104zM670 32h104v1h-104zM670 33h104v1h-104zM670 34h104v1h-104zM671 35h102v1h-102zM673 36h98v1h-98z" fill="#000"/>
<path d="M5 521h411v1h-411zM3 522h415v1h-415zM2 523h417v1h-417zM1 524h419v1h-419zM1 525h419v1h-419zM1 526h419v1h-419zM1 527h419v1h-419zM1 528h419v1h-419zM1 529h419v1h-419zM1 530h419v1h-419zM1 531h419v1h-419zM1 532h419v1h-419zM1 533h419v1h-419zM1 534h419v1h-419zM1 535h419v1h-419zM1 536h419v1h-419zM1 537h419v1h-419zM2 538h417v1h-417zM3 539h415v1h-415zM5 540h411v1h-411z" fill="#ffffff"/><path d="M5 522h411v1h-411zM3 523h415v1h-415zM2 524h417v1h-417zM2 525h417v1h-417zM2 526h417v1h-417zM2 527h417v1h-417zM2 528h417v1h-417zM2 529h417v1h-417zM2 530h417v1h-417zM2 531h417v1h-417zM2 532h417v1h-417zM2 533h417v1h-417zM2 534h417v1h-417zM2 535h417v1h-417zM2 536h417v1h-417zM2 537h417v1h-417zM3 538h415v1h-415zM5 539h411v1h-411z" fill="#000"/>
<path d="M429 521h160v1h-160zM427 522h164v1h-164zM426 523h166v1h-166zM425 524h168v1h-168zM425 525h168v1h-168zM425 526h168v1h-168zM425 527h168v1h-168zM425 528h168v1h-168zM425 529h168v1h-168zM425 530h168v1h-168zM425 531h168v1h-168zM425 532h168v1h-168zM425 533h168v1h-168zM425 534h168v1h-168zM425 535h168v1h-168zM425 536h168v1h-168zM425 537h168v1h-168zM426 538h166v1h-166zM427 539h164v1h-164zM429 540h160v1h-160z" fill="#ffffff"/><path d="M429 522h160v1h-160zM427 523h164v1h-164zM426 524h166v1h-166zM426 525h166v1h-166zM426 526h166v1h-166zM426 527h166v1h-166zM426 528h166v1h-166zM426 529h166v1h-166zM426 530h166v1h-166zM426 531h166v1h-166zM426 532h166v1h-166zM426 533h166v1h-166zM426 534h166v1h-166zM426 535h166v1h-166zM426 536h166v1h-166zM426 537h166v1h-166zM427 538h164v1h-164zM429 539h160v1h-160z" fill="#000"/>
<path d="M603 521h168v1h-168zM601 522h172v1h-172zM600 523h174v1h-174zM599 524h176v1h-176zM599 525h176v1h-176zM599 526h176v1h-176zM599 527h176v1h-176zM599 528h176v1h-176zM599 529h176v1h-176zM599 530h176v1h-176zM599 531h176v1h-176zM599 532h176v1h-176zM599 533h176v1h-176zM599 534h176v1h-176zM599 535h176v1h-176zM599 536h176v1h-176zM599 537h176v1h-176zM599 538h176v1h-176zM599 539h176v1h-176zM599 540h176v1h-176zM599 541h176v1h-176zM599 542h176v1h-176zM599 543h176v1h-176zM599 544h176v1h-176zM599 545h176v1h-176zM599 546h176v1h-176zM599 547h176v1h-176zM599 548h176v1h-176zM599 549h176v1h-176zM599 550h176v1h-176zM599 551h176v1h-176zM599 552h176v1h-176zM599 553h176v1h-176zM599 554h176v1h-176zM599 555h176v1h-176zM599 556h176v1h-176zM600 557h174v1h-174zM601 558h172v1h-172zM603 559h168v1h-168z" fill="#ffffff"/><path d="M603 522h168v1h-168zM601 523h172v1h-172zM600 524h174v1h-174zM600 525h174v1h-174zM600 526h174v1h-174zM600 527h174v1h-174zM600 528h174v1h-174zM600 529h174v1h-174zM600 530h174v1h-174zM600 531h174v1h-174zM600 532h174v1h-174zM600 533h174v1h-174zM600 534h174v1h-174zM600 535h174v1h-174zM600 536h174v1h-174zM600 537h174v1h-174zM600 538h174v1h-174zM600 539h174v1h-174zM600 540h174v1h-174zM600 541h174v1h-174zM600 542h174v1h-174zM600 543h174v1h-174zM600 544h174v1h-174zM600 545h174v1h-174zM600 546h174v1h-174zM600 547h174v1h-174zM600 548h174v1h-174zM600 549h174v1h-174zM600 550h174v1h-174zM600 551h174v1h-174zM600 552h174v1h-174zM600 553h174v1h-174zM600 554h174v1h-174zM600 555h174v1h-174zM600 556h174v1h-174zM601 557h172v1h-172zM603 558h168v1h-168z" fill="#000"/>
<path d="M31 561h738v1h-738zM29 562h742v1h-742zM28 563h744v1h-744zM27 564h746v1h-746zM27 565h746v1h-746zM27 566h746v1h-746zM27 567h746v1h-746zM27 568h746v1h-746zM27 569h746v1h-746zM27 570h746v1h-746zM27 571h746v1h-746zM27 572h746v1h-746zM27 573h746v1h-746zM27 574h746v1h-746zM27 575h746v1h-746zM27 576h746v1h-746zM27 577h746v1h-746zM27 578h746v1h-746zM27 579h746v1h-746zM27 580h746v1h-746zM27 581h746v1h-746zM27 582h746v1h-746zM27 583h746v1h-746zM27 584h746v1h-746zM27 585h746v1h-746zM27 586h746v1h-746zM27 587h746v1h-746zM27 588h746v1h-746zM27 589h746v1h-746zM27 590h746v1h-746zM27 591h746v1h-746zM27 592h746v1h-746zM27 593h746v1h-746zM27 594h746v1h-746zM27 595h746v1h-746zM27 596h746v1h-746zM28 597h744v1h-744zM29 598h742v1h-742zM31 599h738v1h-738z" fill="#ffffff"/><path d="M31 562h738v1h-738zM29 563h742v1h-742zM28 564h744v1h-744zM28 565h744v1h-744zM28 566h744v1h-744zM28 567h744v1h-744zM28 568h744v1h-744zM28 569h744v1h-744zM28 570h744v1h-744zM28 571h744v1h-744zM28 572h744v1h-744zM28 573h744v1h-744zM28 574h744v1h-744zM28 575h744v1h-744zM28 576h744v1h-744zM28 577h744v1h-744zM28 578h744v1h-744zM28 579h744v1h-744zM28 580h744v1h-744zM28 581h744v1h-744zM28 582h744v1h-744zM28 583h744v1h-744zM28 584h744v1h-744zM28 585h744v1h-744zM28 586h744v1h-744zM28 587h744v1h-744zM28 588h744v1h-744zM28 589h744v1h-744zM28 590h744v1h-744zM28 591h744v1h-744zM28 592h744v1h-744zM28 593h744v1h-744zM28 594h744v1h-744zM28 595h744v1h-744zM28 596h744v1h-744zM29 597h742v1h-742zM31 598h738v1h-738z" fill="#000"/>
<path d="M7 524h6v1h-6zM5 525h10v1h-10zM4 526h12v1h-12zM4 527h12v1h-12zM3 528h14v1h-14zM3 529h14v1h-14zM3 530h14v1h-14zM3 531h14v1h-14zM3 532h14v1h-14zM3 533h14v1h-14zM3 534h14v1h-14zM4 535h12v1h-12zM4 536h12v1h-12zM5 537h10v1h-10zM7 538h6v1h-6z" fill="#ffcc00"/><path d="M9 526h2v1h-2zM8 527h3v1h-3zM7 528h4v1h-4zM9 529h2v1h-2zM9 530h2v1h-2zM9 531h2v1h-2zM9 532h2v1h-2zM9 533h2v1h-2zM9 534h2v1h-2zM9 535h2v1h-2zM9 536h2v1h-2zM9 537h2v1h-2z" fill="#000"/>
<rect x="30" y="528" width="14" height="2" fill="#ffcc00"/><rect x="30" y="531" width="4" height="2" fill="#ffcc00"/><rect x="35" y="531" width="4" height="2" fill="#ffcc00"/><rect x="40" y="531" width="4" height="2" fill="#ffcc00"/>
<path d="M114 524h6v1h-6zM112 525h10v1h-10zM111 526h12v1h-12zM111 527h12v1h-12zM110 528h14v1h-14zM110 529h14v1h-14zM110 530h14v1h-14zM110 531h14v1h-14zM110 532h14v1h-14zM110 533h14v1h-14zM110 534h14v1h-14zM111 535h12v1h-12zM111 536h12v1h-12zM112 537h10v1h-10zM114 538h6v1h-6z" fill="#00ffff"/><path d="M115 525h4v1h-4zM114 526h1v1h-1zM119 526h1v1h-1zM113 527h1v1h-1zM120 527h1v1h-1zM113 528h2v1h-2zM120 528h1v1h-1zM120 529h1v1h-1zM119 530h1v1h-1zM117 531h2v1h-2zM116 532h1v1h-1zM115 533h1v1h-1zM114 534h1v1h-1zM113 535h1v1h-1zM113 536h8v1h-8z" fill="#000"/>
<rect x="137" y="528" width="14" height="2" fill="#00ffff"/><rect x="137" y="531" width="4" height="2" fill="#00ffff"/><rect x="142" y="531" width="4" height="2" fill="#00ffff"/><rect x="147" y="531" width="4" height="2" fill="#00ffff"/>
<path d="M221 524h6v1h-6zM219 525h10v1h-10zM218 526h12v1h-12zM218 527h12v1h-12zM217 528h14v1h-14zM217 529h14v1h-14zM217 530h14v1h-14zM217 531h14v1h-14zM217 532h14v1h-14zM217 533h14v1h-14zM217 534h14v1h-14zM218 535h12v1h-12zM218 536h12v1h-12zM219 537h10v1h-10zM221 538h6v1h-6z" fill="#3e3e3e"/><path d="M221 525h5v1h-5zM220 526h1v1h-1zM226 526h1v1h-1zM220 527h2v1h-2zM226 527h1v1h-1zM225 528h1v1h-1zM223 529h2v1h-2zM223 530h2v1h-2zM225 531h1v1h-1zM220 532h2v1h-2zM226 532h1v1h-1zM220 533h1v1h-1zM226 533h1v1h-1zM221 534h5v1h-5z" fill="#000"/>
<rect x="244" y="528" width="14" height="2" fill="#3e3e3e"/><rect x="244" y="531" width="4" height="2" fill="#3e3e3e"/><rect x="249" y="531" width="4" height="2" fill="#3e3e3e"/><rect x="254" y="531" width="4" height="2" fill="#3e3e3e"/>
<path d="M328 524h6v1h-6zM326 525h10v1h-10zM325 526h12v1h-12zM325 527h12v1h-12zM324 528h14v1h-14zM324 529h14v1h-14zM324 530h14v1h-14zM324 531h14v1h-14zM324 532h14v1h-14zM324 533h14v1h-14zM324 534h14v1h-14zM325 535h12v1h-12zM325 536h12v1h-12zM326 537h10v1h-10zM328 538h6v1h-6z" fill="#3e3e3e"/><path d="M331 525h2v1h-2zM330 526h3v1h-3zM329 527h1v1h-1zM331 527h2v1h-2zM328 528h1v1h-1zM331 528h2v1h-2zM327 529h1v1h-1zM331 529h2v1h-2zM326 530h1v1h-1zM331 530h2v1h-2zM326 531h7v1h-7zM326 532h7v1h-7zM331 533h2v1h-2zM331 534h2v1h-2zM331 535h2v1h-2zM331 536h2v1h-2z" fill="#000"/>
<rect x="351" y="528" width="14" height="2" fill="#3e3e3e"/><rect x="351" y="531" width="4" height="2" fill="#3e3e3e"/><rect x="356" y="531" width="4" height="2" fill="#3e3e3e"/><rect x="361" y="531" width="4" height="2" fill="#3e3e3e"/>
<path d="M501 524h10v1h-10zM500 525h12v1h-12zM499 526h14v1h-14zM499 527h14v1h-14zM499 528h14v1h-14zM499 529h14v1h-14zM499 530h14v1h-14zM499 531h14v1h-14zM499 532h14v1h-14zM499 533h14v1h-14zM499 534h14v1h-14zM499 535h14v1h-14zM500 536h12v1h-12zM501 537h10v1h-10z" fill="#fff"/>
<path d="M501 526h2v11h-2z M509 526h2v11h-2z M501 530h10v2h-10z" fill="#000"/>
<path d="M626 524h6v1h-6zM624 525h10v1h-10zM623 526h12v1h-12zM623 527h12v1h-12zM622 528h14v1h-14zM622 529h14v1h-14zM622 530h14v1h-14zM622 531h14v1h-14zM622 532h14v1h-14zM622 533h14v1h-14zM622 534h14v1h-14zM623 535h12v1h-12zM623 536h12v1h-12zM624 537h10v1h-10zM626 538h6v1h-6z" fill="#ffcc00"/><path d="M628 526h2v1h-2zM627 527h3v1h-3zM626 528h4v1h-4zM628 529h2v1h-2zM628 530h2v1h-2zM628 531h2v1h-2zM628 532h2v1h-2zM628 533h2v1h-2zM628 534h2v1h-2zM628 535h2v1h-2zM628 536h2v1h-2zM628 537h2v1h-2z" fill="#000"/>
<path d="M658 525h5v1h-5zM658 526h1v1h-1zM658 527h1v1h-1zM657 528h3v1h-3zM656 529h1v1h-1zM658 529h1v1h-1zM660 529h1v1h-1zM655 530h1v1h-1zM658 530h1v1h-1zM661 530h1v1h-1zM658 531h1v1h-1zM658 532h1v1h-1zM658 533h1v1h-1zM658 534h1v1h-1zM658 535h1v1h-1zM658 536h1v1h-1zM654 537h5v1h-5z" fill="#ffcc00"/>
<path d="M33 564h6v1h-6zM31 565h10v1h-10zM30 566h12v1h-12zM30 567h12v1h-12zM29 568h14v1h-14zM29 569h14v1h-14zM29 570h14v1h-14zM29 571h14v1h-14zM29 572h14v1h-14zM29 573h14v1h-14zM29 574h14v1h-14zM30 575h12v1h-12zM30 576h12v1h-12zM31 577h10v1h-10zM33 578h6v1h-6z" fill="#ffcc00"/><path d="M35 566h2v1h-2zM34 567h3v1h-3zM33 568h4v1h-4zM35 569h2v1h-2zM35 570h2v1h-2zM35 571h2v1h-2zM35 572h2v1h-2zM35 573h2v1h-2zM35 574h2v1h-2zM35 575h2v1h-2zM35 576h2v1h-2zM35 577h2v1h-2z" fill="#000"/>
<path d="M33 582h6v1h-6zM31 583h10v1h-10zM30 584h12v1h-12zM30 585h12v1h-12zM29 586h14v1h-14zM29 587h14v1h-14zM29 588h14v1h-14zM29 589h14v1h-14zM29 590h14v1h-14zM29 591h14v1h-14zM29 592h14v1h-14zM30 593h12v1h-12zM30 594h12v1h-12zM31 595h10v1h-10zM33 596h6v1h-6z" fill="#ffcc00"/><path d="M35 584h2v1h-2zM34 585h3v1h-3zM33 586h4v1h-4zM35 587h2v1h-2zM35 588h2v1h-2zM35 589h2v1h-2zM35 590h2v1h-2zM35 591h2v1h-2zM35 592h2v1h-2zM35 593h2v1h-2zM35 594h2v1h-2zM35 595h2v1h-2z" fill="#000"/>
<path d="M219 564h6v1h-6zM217 565h10v1h-10zM216 566h12v1h-12zM216 567h12v1h-12zM215 568h14v1h-14zM215 569h14v1h-14zM215 570h14v1h-14zM215 571h14v1h-14zM215 572h14v1h-14zM215 573h14v1h-14zM215 574h14v1h-14zM216 575h12v1h-12zM216 576h12v1h-12zM217 577h10v1h-10zM219 578h6v1h-6z" fill="#00ffff"/><path d="M220 565h4v1h-4zM219 566h1v1h-1zM224 566h1v1h-1zM218 567h1v1h-1zM225 567h1v1h-1zM218 568h2v1h-2zM225 568h1v1h-1zM225 569h1v1h-1zM224 570h1v1h-1zM222 571h2v1h-2zM221 572h1v1h-1zM220 573h1v1h-1zM219 574h1v1h-1zM218 575h1v1h-1zM218 576h8v1h-8z" fill="#000"/>
<path d="M219 582h6v1h-6zM217 583h10v1h-10zM216 584h12v1h-12zM216 585h12v1h-12zM215 586h14v1h-14zM215 587h14v1h-14zM215 588h14v1h-14zM215 589h14v1h-14zM215 590h14v1h-14zM215 591h14v1h-14zM215 592h14v1h-14zM216 593h12v1h-12zM216 594h12v1h-12zM217 595h10v1h-10zM219 596h6v1h-6z" fill="#ffcc00"/><path d="M221 584h2v1h-2zM220 585h3v1h-3zM219 586h4v1h-4zM221 587h2v1h-2zM221 588h2v1h-2zM221 589h2v1h-2zM221 590h2v1h-2zM221 591h2v1h-2zM221 592h2v1h-2zM221 593h2v1h-2zM221 594h2v1h-2zM221 595h2v1h-2z" fill="#000"/>
<path d="M405 564h6v1h-6zM403 565h10v1h-10zM402 566h12v1h-12zM402 567h12v1h-12zM401 568h14v1h-14zM401 569h14v1h-14zM401 570h14v1h-14zM401 571h14v1h-14zM401 572h14v1h-14zM401 573h14v1h-14zM401 574h14v1h-14zM402 575h12v1h-12zM402 576h12v1h-12zM403 577h10v1h-10zM405 578h6v1h-6z" fill="#ffcc00"/><path d="M407 566h2v1h-2zM406 567h3v1h-3zM405 568h4v1h-4zM407 569h2v1h-2zM407 570h2v1h-2zM407 571h2v1h-2zM407 572h2v1h-2zM407 573h2v1h-2zM407 574h2v1h-2zM407 575h2v1h-2zM407 576h2v1h-2zM407 577h2v1h-2z" fill="#000"/>
<path d="M405 582h6v1h-6zM403 583h10v1h-10zM402 584h12v1h-12zM402 585h12v1h-12zM401 586h14v1h-14zM401 587h14v1h-14zM401 588h14v1h-14zM401 589h14v1h-14zM401 590h14v1h-14zM401 591h14v1h-14zM401 592h14v1h-14zM402 593h12v1h-12zM402 594h12v1h-12zM403 595h10v1h-10zM405 596h6v1h-6z" fill="#00ffff"/><path d="M406 583h4v1h-4zM405 584h1v1h-1zM410 584h1v1h-1zM404 585h1v1h-1zM411 585h1v1h-1zM404 586h2v1h-2zM411 586h1v1h-1zM411 587h1v1h-1zM410 588h1v1h-1zM408 589h2v1h-2zM407 590h1v1h-1zM406 591h1v1h-1zM405 592h1v1h-1zM404 593h1v1h-1zM404 594h8v1h-8z" fill="#000"/>
<path d="M591 564h6v1h-6zM589 565h10v1h-10zM588 566h12v1h-12zM588 567h12v1h-12zM587 568h14v1h-14zM587 569h14v1h-14zM587 570h14v1h-14zM587 571h14v1h-14zM587 572h14v1h-14zM587 573h14v1h-14zM587 574h14v1h-14zM588 575h12v1h-12zM588 576h12v1h-12zM589 577h10v1h-10zM591 578h6v1h-6z" fill="#00ffff"/><path d="M592 565h4v1h-4zM591 566h1v1h-1zM596 566h1v1h-1zM590 567h1v1h-1zM597 567h1v1h-1zM590 568h2v1h-2zM597 568h1v1h-1zM597 569h1v1h-1zM596 570h1v1h-1zM594 571h2v1h-2zM593 572h1v1h-1zM592 573h1v1h-1zM591 574h1v1h-1zM590 575h1v1h-1zM590 576h8v1h-8z" fill="#000"/>
<path d="M591 582h6v1h-6zM589 583h10v1h-10zM588 584h12v1h-12zM588 585h12v1h-12zM587 586h14v1h-14zM587 587h14v1h-14zM587 588h14v1h-14zM587 589h14v1h-14zM587 590h14v1h-14zM587 591h14v1h-14zM587 592h14v1h-14zM588 593h12v1h-12zM588 594h12v1h-12zM589 595h10v1h-10zM591 596h6v1h-6z" fill="#00ffff"/><path d="M592 583h4v1h-4zM591 584h1v1h-1zM596 584h1v1h-1zM590 585h1v1h-1zM597 585h1v1h-1zM590 586h2v1h-2zM597 586h1v1h-1zM597 587h1v1h-1zM596 588h1v1h-1zM594 589h2v1h-2zM593 590h1v1h-1zM592 591h1v1h-1zM591 592h1v1h-1zM590 593h1v1h-1zM590 594h8v1h-8z" fill="#000"/>
</svg>
<div class="mono" style="top:524px;color:#ffcc00;font-size:14px;font-weight:normal"><span style="left:65.00px">5</span><span style="left:73.00px;transform:scaleX(0.835)">V</span></div><div class="mono" style="top:524px;color:#00ffff;font-size:14px;font-weight:normal"><span style="left:173.00px">5</span><span style="left:181.00px;transform:scaleX(0.835)">V</span></div><div class="mono" style="top:524px;color:#3e3e3e;font-size:14px;font-weight:normal"><span style="left:280.00px">2</span><span style="left:288.00px;transform:scaleX(0.835)">V</span></div><div class="mono" style="top:524px;color:#3e3e3e;font-size:14px;font-weight:normal"><span style="left:386.00px">5</span><span style="left:394.00px;transform:scaleX(0.835)">V</span></div><div class="mono" style="top:524px;color:#ffffff;font-size:14px;font-weight:normal"><span style="left:449.00px">5</span><span style="left:457.00px">0</span><span style="left:465.00px">0</span><span style="left:473.00px">u</span><span style="left:481.00px">s</span></div><div class="mono" style="top:524px;color:#ffffff;font-size:14px;font-weight:normal"><span style="left:532.00px">0</span><span style="left:540.00px">.</span><span style="left:548.00px">0</span><span style="left:556.00px">0</span><span style="left:564.00px">0</span><span style="left:572.00px">s</span></div><div class="mono" style="top:524px;color:#ffcc00;font-size:14px;font-weight:normal"><span style="left:681.00px">1</span><span style="left:689.00px">.</span><span style="left:697.00px">6</span><span style="left:705.00px">0</span><span style="left:713.00px;transform:scaleX(0.835)">V</span></div><div class="mono" style="top:524px;color:#ffcc00;font-size:14px;font-weight:normal"><span style="left:755.50px;transform:scaleX(0.772)">D</span><span style="left:763.50px;transform:scaleX(0.772)">C</span></div><div class="mono" style="top:501.5px;color:#ffffff;font-size:14px;font-weight:normal"><span style="left:685.00px">4</span><span style="left:693.00px">0</span><span style="left:701.00px">8</span><span style="left:709.00px">.</span><span style="left:717.00px">3</span><span style="left:725.00px">8</span><span style="left:733.00px">2</span><span style="left:741.00px;transform:scaleX(0.772)">H</span><span style="left:749.00px">z</span></div><div class="mono" style="top:5px;color:#ffffff;font-size:14px;font-weight:normal"><span style="left:677.60px">0</span><span style="left:685.60px">5</span><span style="left:701.60px;transform:scaleX(0.772)">N</span><span style="left:709.60px">o</span><span style="left:717.60px">v</span><span style="left:733.60px">2</span><span style="left:741.60px">0</span><span style="left:749.60px">1</span><span style="left:757.60px">5</span></div><div class="mono" style="top:21px;color:#ffffff;font-size:14px;font-weight:normal"><span style="left:697.80px">2</span></div><div class="mono" style="top:21px;color:#ffffff;font-size:14px;font-weight:normal"><span style="left:705.80px">2</span></div><div class="mono" style="top:21px;color:#ffffff;font-size:14px;font-weight:normal"><span style="left:715.20px">:</span></div><div class="mono" style="top:21px;color:#ffffff;font-size:14px;font-weight:normal"><span style="left:724.00px">3</span></div><div class="mono" style="top:21px;color:#ffffff;font-size:14px;font-weight:normal"><span style="left:732.00px">9</span></div><div class="mono" style="top:21px;color:#ffffff;font-size:14px;font-weight:normal"><span style="left:741.20px">:</span></div><div class="mono" style="top:21px;color:#ffffff;font-size:14px;font-weight:normal"><span style="left:750.00px">4</span></div><div class="mono" style="top:21px;color:#ffffff;font-size:14px;font-weight:normal"><span style="left:758.00px">2</span></div><div class="mono" style="top:564px;color:#ffcc00;font-size:14px;font-weight:normal"><span style="left:45.00px;transform:scaleX(0.836)">Ч</span><span style="left:53.00px">а</span><span style="left:61.00px">с</span><span style="left:69.00px">т</span><span style="left:77.00px">о</span><span style="left:85.00px">т</span><span style="left:93.00px">а</span></div><div class="mono" style="top:564px;color:#ffcc00;font-size:14px;font-weight:bold"><span style="left:109.00px">4</span><span style="left:117.00px">0</span><span style="left:125.00px">8</span><span style="left:133.00px">.</span><span style="left:141.00px">2</span><span style="left:149.00px;transform:scaleX(0.772)">H</span><span style="left:157.00px">z</span></div><div class="mono" style="top:582px;color:#ffcc00;font-size:14px;font-weight:normal"><span style="left:45.00px;transform:scaleX(0.772)">С</span><span style="left:53.00px">к</span><span style="left:61.00px">в</span><span style="left:69.00px">а</span><span style="left:77.00px;transform:scaleX(0.833)">ж</span><span style="left:85.00px">н</span><span style="left:93.00px">о</span><span style="left:101.00px">с</span><span style="left:109.00px">т</span><span style="left:117.00px">ь</span></div><div class="mono" style="top:582px;color:#ffcc00;font-size:14px;font-weight:bold"><span style="left:133.00px">5</span><span style="left:141.00px">0</span><span style="left:149.00px">.</span><span style="left:157.00px">0</span><span style="left:165.00px">6</span><span style="left:173.00px;transform:scaleX(0.626)">%</span></div><div class="mono" style="top:564px;color:#00ffff;font-size:14px;font-weight:normal"><span style="left:231.00px;transform:scaleX(0.753)">Ц</span><span style="left:239.00px;transform:scaleX(0.996)">и</span><span style="left:247.00px">к</span><span style="left:255.00px;transform:scaleX(0.954)">л</span><span style="left:263.00px;transform:scaleX(0.772)">С</span><span style="left:271.00px">р</span><span style="left:279.00px">е</span><span style="left:287.00px;transform:scaleX(0.954)">д</span><span style="left:295.00px">н</span><span style="left:303.00px">е</span><span style="left:311.00px">е</span></div><div class="mono" style="top:564px;color:#00ffff;font-size:14px;font-weight:bold"><span style="left:327.00px">7</span><span style="left:335.00px">9</span><span style="left:343.00px">.</span><span style="left:351.00px">2</span><span style="left:359.00px;transform:scaleX(0.626)">m</span><span style="left:367.00px;transform:scaleX(0.835)">V</span></div><div class="mono" style="top:582px;color:#ffcc00;font-size:14px;font-weight:normal"><span style="left:231.00px;transform:scaleX(0.835)">А</span><span style="left:239.00px;transform:scaleX(0.810)">м</span><span style="left:247.00px">п</span><span style="left:255.00px;transform:scaleX(0.954)">л</span><span style="left:263.00px;transform:scaleX(0.996)">и</span><span style="left:271.00px">т</span><span style="left:279.00px">у</span><span style="left:287.00px;transform:scaleX(0.954)">д</span><span style="left:295.00px">а</span></div><div class="mono" style="top:582px;color:#ffcc00;font-size:14px;font-weight:bold"><span style="left:311.00px">2</span><span style="left:319.00px">0</span><span style="left:327.00px">.</span><span style="left:335.00px">6</span><span style="left:343.00px;transform:scaleX(0.835)">V</span></div><div class="mono" style="top:564px;color:#ffcc00;font-size:14px;font-weight:normal"><span style="left:417.00px;transform:scaleX(0.753)">Ц</span><span style="left:425.00px;transform:scaleX(0.996)">и</span><span style="left:433.00px">к</span><span style="left:441.00px;transform:scaleX(0.954)">л</span><span style="left:449.00px;transform:scaleX(0.772)">С</span><span style="left:457.00px">р</span><span style="left:465.00px">е</span><span style="left:473.00px;transform:scaleX(0.954)">д</span><span style="left:481.00px">н</span><span style="left:489.00px">е</span><span style="left:497.00px">е</span></div><div class="mono" style="top:564px;color:#ffcc00;font-size:14px;font-weight:bold"><span style="left:513.00px">-</span><span style="left:521.00px">1</span><span style="left:529.00px">7</span><span style="left:537.00px">7</span><span style="left:545.00px;transform:scaleX(0.626)">m</span><span style="left:553.00px;transform:scaleX(0.835)">V</span></div><div class="mono" style="top:582px;color:#00ffff;font-size:14px;font-weight:normal"><span style="left:417.00px;transform:scaleX(0.772)">С</span><span style="left:425.00px">к</span><span style="left:433.00px">в</span><span style="left:441.00px">а</span><span style="left:449.00px;transform:scaleX(0.833)">ж</span><span style="left:457.00px">н</span><span style="left:465.00px">о</span><span style="left:473.00px">с</span><span style="left:481.00px">т</span><span style="left:489.00px">ь</span></div><div class="mono" style="top:582px;color:#00ffff;font-size:14px;font-weight:bold"><span style="left:505.00px">5</span><span style="left:513.00px">0</span><span style="left:521.00px">.</span><span style="left:529.00px">4</span><span style="left:537.00px">5</span><span style="left:545.00px;transform:scaleX(0.626)">%</span></div><div class="mono" style="top:564px;color:#00ffff;font-size:14px;font-weight:normal"><span style="left:603.00px;transform:scaleX(0.835)">А</span><span style="left:611.00px;transform:scaleX(0.810)">м</span><span style="left:619.00px">п</span><span style="left:627.00px;transform:scaleX(0.954)">л</span><span style="left:635.00px;transform:scaleX(0.996)">и</span><span style="left:643.00px">т</span><span style="left:651.00px">у</span><span style="left:659.00px;transform:scaleX(0.954)">д</span><span style="left:667.00px">а</span></div><div class="mono" style="top:564px;color:#00ffff;font-size:14px;font-weight:bold"><span style="left:683.00px">2</span><span style="left:691.00px">0</span><span style="left:699.00px">.</span><span style="left:707.00px">4</span><span style="left:715.00px;transform:scaleX(0.835)">V</span></div><div class="mono" style="top:582px;color:#00ffff;font-size:14px;font-weight:normal"><span style="left:603.00px;transform:scaleX(0.836)">Ч</span><span style="left:611.00px">а</span><span style="left:619.00px">с</span><span style="left:627.00px">т</span><span style="left:635.00px">о</span><span style="left:643.00px">т</span><span style="left:651.00px">а</span></div><div class="mono" style="top:582px;color:#00ffff;font-size:14px;font-weight:bold"><span style="left:667.00px">4</span><span style="left:675.00px">0</span><span style="left:683.00px">9</span><span style="left:691.00px">.</span><span style="left:699.00px">2</span><span style="left:707.00px;transform:scaleX(0.772)">H</span><span style="left:715.00px">z</span></div>
</body></html>
